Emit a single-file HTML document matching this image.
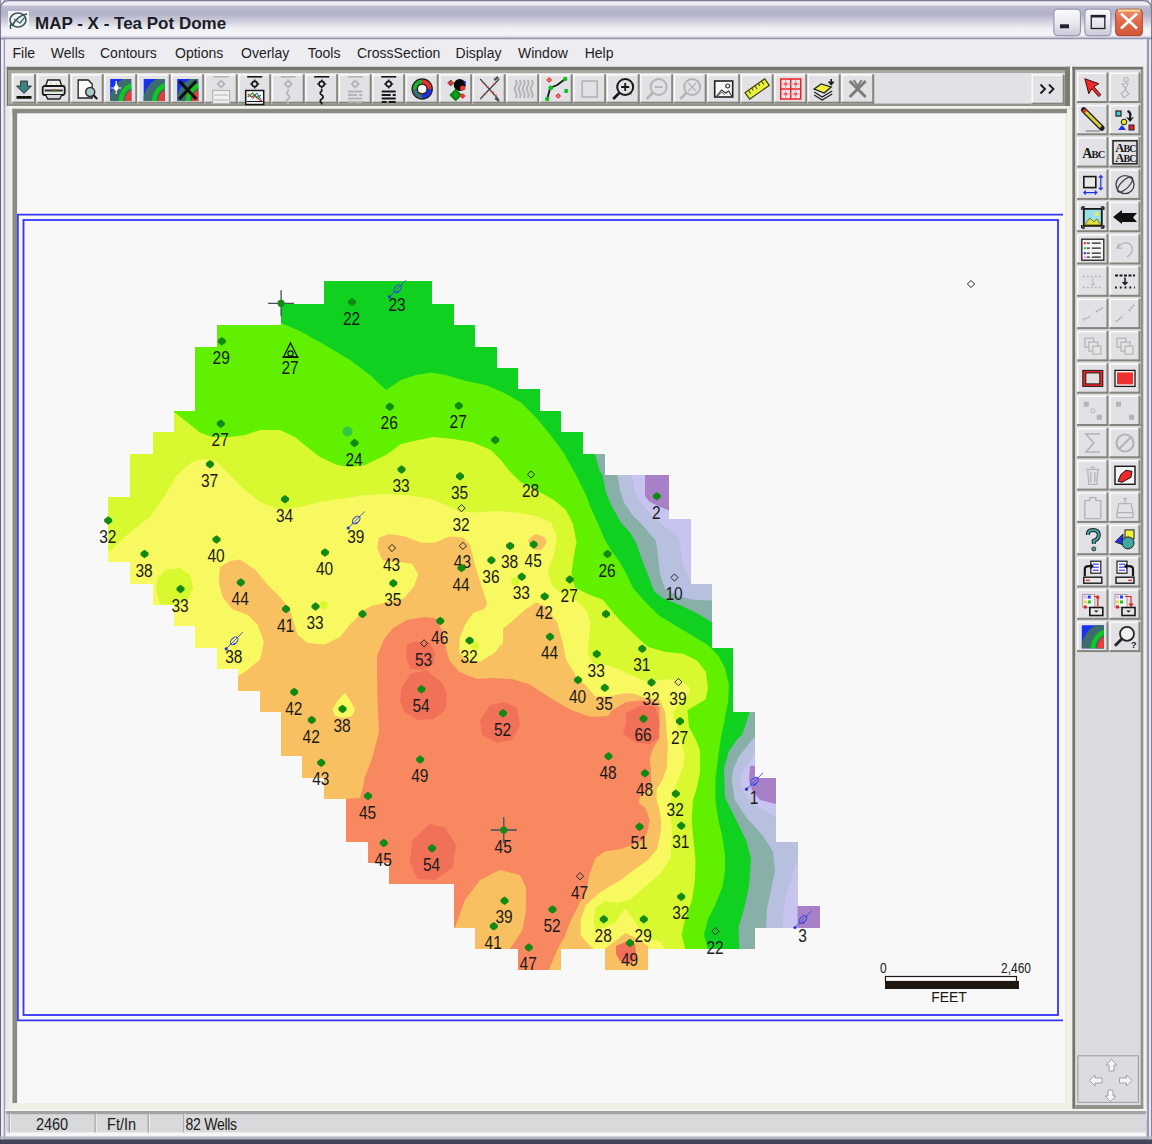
<!DOCTYPE html>
<html><head><meta charset="utf-8"><title>MAP - X - Tea Pot Dome</title>
<style>
html,body{margin:0;padding:0;width:1152px;height:1144px;overflow:hidden;background:#e2e1e5;font-family:"Liberation Sans",sans-serif}
#w{position:relative;width:1152px;height:1144px}
</style></head><body><div id="w">
<svg width="1152" height="1144" viewBox="0 0 1152 1144" style="position:absolute;left:0;top:0">
<rect x="0" y="0" width="1152" height="1144" fill="#e2e1e5" />
<rect x="0" y="0" width="1152" height="1144" fill="#6c6488" />
<rect x="0.7" y="0" width="1150.6" height="1143.3" fill="#ececf2" />
<rect x="3.7" y="0" width="1144.6" height="1140" fill="#9c9cb4" />
<rect x="5.2" y="0" width="1141.6" height="1137" fill="#e8e8ec" />
<defs><linearGradient id="tg" x1="0" y1="0" x2="0" y2="1"><stop offset="0" stop-color="#f2f2f6"/><stop offset="0.1" stop-color="#ececf2"/><stop offset="0.15" stop-color="#bcbcd0"/><stop offset="0.35" stop-color="#b2b2c8"/><stop offset="0.55" stop-color="#cdcddb"/><stop offset="0.75" stop-color="#eeeef3"/><stop offset="0.92" stop-color="#f6f6f9"/><stop offset="1" stop-color="#e4e4ec"/></linearGradient><linearGradient id="bg" x1="0" y1="0" x2="0" y2="1"><stop offset="0" stop-color="#fdfdfe"/><stop offset="0.6" stop-color="#e4e4ec"/><stop offset="1" stop-color="#c8c8d8"/></linearGradient><linearGradient id="cg" x1="0" y1="0" x2="0" y2="1"><stop offset="0" stop-color="#f09070"/><stop offset="0.5" stop-color="#e06848"/><stop offset="1" stop-color="#d05838"/></linearGradient></defs>
<path d="M0,37 V9 Q0,0 9,0 H1143 Q1152,0 1152,9 V37Z" fill="#7c7898"/>
<path d="M1,37 V9.5 Q1,1.2 9.5,1.2 H1142.5 Q1151,1.2 1151,9.5 V37Z" fill="url(#tg)"/>
<rect x="0" y="36.5" width="1152" height="1.2" fill="#d0d0dc" />
<rect x="0" y="37.7" width="1152" height="1.8" fill="#9494ac" />
<rect x="0" y="36.5" width="1" height="1108" fill="#6c6488" />
<rect x="1151" y="36.5" width="1" height="1108" fill="#6c6488" />
<text x="35" y="28.6" font-family="Liberation Sans, sans-serif" font-weight="bold" font-size="17" fill="#1c1c28">MAP - X - Tea Pot Dome</text>
<g transform="translate(8,11)"><rect x="0" y="0" width="21" height="20" fill="#f4f4f8"/><ellipse cx="10" cy="9" rx="8" ry="7" fill="none" stroke="#405858" stroke-width="1.6"/><path d="M4,15 Q10,4 19,3" stroke="#305050" stroke-width="1.6" fill="none"/><path d="M6,8 L12,12 L17,6" stroke="#407070" stroke-width="1.4" fill="none"/><path d="M3,18 Q1,14 4,13" stroke="#304848" stroke-width="1.4" fill="none"/></g>
<rect x="1053.9" y="9.2" width="26.5" height="26.5" rx="3.5" fill="url(#bg)" stroke="#8c8ca8" stroke-width="1"/>
<rect x="1060" y="24.3" width="9" height="4" fill="#202030" />
<rect x="1084.9" y="9.2" width="26" height="26.5" rx="3.5" fill="url(#bg)" stroke="#8c8ca8" stroke-width="1"/>
<rect x="1091.3" y="15.5" width="13.5" height="13" fill="none" stroke="#202030" stroke-width="1.3"/>
<rect x="1091" y="15" width="14.5" height="2.5" fill="#202030" />
<rect x="1115.7" y="9.2" width="26.6" height="26.5" rx="3.5" fill="url(#cg)" stroke="#a83c30" stroke-width="1"/>
<rect x="1118" y="9.5" width="22" height="2" fill="#f8e090" />
<path d="M1121,13.5 L1137,28.5 M1137,13.5 L1121,28.5" stroke="#fff" stroke-width="2.6"/>
<rect x="5.2" y="39.5" width="1141.6" height="27.3" fill="#ececf1" />
<g font-family="Liberation Sans, sans-serif" font-size="14" fill="#1e1e1e">
<text x="12.5" y="57.8">File</text>
<text x="50.8" y="57.8">Wells</text>
<text x="100" y="57.8">Contours</text>
<text x="175" y="57.8">Options</text>
<text x="241" y="57.8">Overlay</text>
<text x="307.8" y="57.8">Tools</text>
<text x="357" y="57.8">CrossSection</text>
<text x="455.6" y="57.8">Display</text>
<text x="518" y="57.8">Window</text>
<text x="584.7" y="57.8">Help</text>
</g>
<rect x="6.8" y="66.8" width="1064.2" height="3.2" fill="#74746c" />
<rect x="6.8" y="66.8" width="1.8" height="41" fill="#74746c" />
<rect x="8.6" y="70" width="1062" height="3" fill="#a8a8a2" />
<rect x="8.6" y="70" width="3" height="37" fill="#a8a8a2" />
<rect x="11.6" y="73" width="1054.6" height="31" fill="#e2e1e5" />
<rect x="8.6" y="103.6" width="1062" height="2.5" fill="#92928a" />
<rect x="1065" y="66.8" width="5" height="41" fill="#7c7c74" />
<rect x="1070" y="66.8" width="2.4" height="42" fill="#f2f2ea" />
<rect x="6.8" y="106" width="1066" height="3" fill="#f2f2ea" />
<rect x="12" y="74.2" width="24" height="29.5" fill="#e2e1e5" /><rect x="12" y="74.2" width="24" height="1.5" fill="#fbfbf8" /><rect x="12" y="74.2" width="1.5" height="29.5" fill="#fbfbf8" /><rect x="12" y="101.7" width="24" height="2" fill="#85857d" /><rect x="34" y="74.2" width="2" height="29.5" fill="#85857d" />
<rect x="37.2" y="74.2" width="33" height="29.5" fill="#e2e1e5" /><rect x="37.2" y="74.2" width="33" height="1.5" fill="#fbfbf8" /><rect x="37.2" y="74.2" width="1.5" height="29.5" fill="#fbfbf8" /><rect x="37.2" y="101.7" width="33" height="2" fill="#85857d" /><rect x="68.2" y="74.2" width="2" height="29.5" fill="#85857d" />
<rect x="70.7" y="74.2" width="33" height="29.5" fill="#e2e1e5" /><rect x="70.7" y="74.2" width="33" height="1.5" fill="#fbfbf8" /><rect x="70.7" y="74.2" width="1.5" height="29.5" fill="#fbfbf8" /><rect x="70.7" y="101.7" width="33" height="2" fill="#85857d" /><rect x="101.7" y="74.2" width="2" height="29.5" fill="#85857d" />
<rect x="104.2" y="74.2" width="33" height="29.5" fill="#e2e1e5" /><rect x="104.2" y="74.2" width="33" height="1.5" fill="#fbfbf8" /><rect x="104.2" y="74.2" width="1.5" height="29.5" fill="#fbfbf8" /><rect x="104.2" y="101.7" width="33" height="2" fill="#85857d" /><rect x="135.2" y="74.2" width="2" height="29.5" fill="#85857d" />
<rect x="137.7" y="74.2" width="33" height="29.5" fill="#e2e1e5" /><rect x="137.7" y="74.2" width="33" height="1.5" fill="#fbfbf8" /><rect x="137.7" y="74.2" width="1.5" height="29.5" fill="#fbfbf8" /><rect x="137.7" y="101.7" width="33" height="2" fill="#85857d" /><rect x="168.7" y="74.2" width="2" height="29.5" fill="#85857d" />
<rect x="171.2" y="74.2" width="33" height="29.5" fill="#e2e1e5" /><rect x="171.2" y="74.2" width="33" height="1.5" fill="#fbfbf8" /><rect x="171.2" y="74.2" width="1.5" height="29.5" fill="#fbfbf8" /><rect x="171.2" y="101.7" width="33" height="2" fill="#85857d" /><rect x="202.2" y="74.2" width="2" height="29.5" fill="#85857d" />
<rect x="204.7" y="74.2" width="33" height="29.5" fill="#e2e1e5" /><rect x="204.7" y="74.2" width="33" height="1.5" fill="#fbfbf8" /><rect x="204.7" y="74.2" width="1.5" height="29.5" fill="#fbfbf8" /><rect x="204.7" y="101.7" width="33" height="2" fill="#85857d" /><rect x="235.7" y="74.2" width="2" height="29.5" fill="#85857d" />
<rect x="238.2" y="74.2" width="33" height="29.5" fill="#e2e1e5" /><rect x="238.2" y="74.2" width="33" height="1.5" fill="#fbfbf8" /><rect x="238.2" y="74.2" width="1.5" height="29.5" fill="#fbfbf8" /><rect x="238.2" y="101.7" width="33" height="2" fill="#85857d" /><rect x="269.2" y="74.2" width="2" height="29.5" fill="#85857d" />
<rect x="271.7" y="74.2" width="33" height="29.5" fill="#e2e1e5" /><rect x="271.7" y="74.2" width="33" height="1.5" fill="#fbfbf8" /><rect x="271.7" y="74.2" width="1.5" height="29.5" fill="#fbfbf8" /><rect x="271.7" y="101.7" width="33" height="2" fill="#85857d" /><rect x="302.7" y="74.2" width="2" height="29.5" fill="#85857d" />
<rect x="305.2" y="74.2" width="33" height="29.5" fill="#e2e1e5" /><rect x="305.2" y="74.2" width="33" height="1.5" fill="#fbfbf8" /><rect x="305.2" y="74.2" width="1.5" height="29.5" fill="#fbfbf8" /><rect x="305.2" y="101.7" width="33" height="2" fill="#85857d" /><rect x="336.2" y="74.2" width="2" height="29.5" fill="#85857d" />
<rect x="338.7" y="74.2" width="33" height="29.5" fill="#e2e1e5" /><rect x="338.7" y="74.2" width="33" height="1.5" fill="#fbfbf8" /><rect x="338.7" y="74.2" width="1.5" height="29.5" fill="#fbfbf8" /><rect x="338.7" y="101.7" width="33" height="2" fill="#85857d" /><rect x="369.7" y="74.2" width="2" height="29.5" fill="#85857d" />
<rect x="372.2" y="74.2" width="33" height="29.5" fill="#e2e1e5" /><rect x="372.2" y="74.2" width="33" height="1.5" fill="#fbfbf8" /><rect x="372.2" y="74.2" width="1.5" height="29.5" fill="#fbfbf8" /><rect x="372.2" y="101.7" width="33" height="2" fill="#85857d" /><rect x="403.2" y="74.2" width="2" height="29.5" fill="#85857d" />
<rect x="405.7" y="74.2" width="33" height="29.5" fill="#e2e1e5" /><rect x="405.7" y="74.2" width="33" height="1.5" fill="#fbfbf8" /><rect x="405.7" y="74.2" width="1.5" height="29.5" fill="#fbfbf8" /><rect x="405.7" y="101.7" width="33" height="2" fill="#85857d" /><rect x="436.7" y="74.2" width="2" height="29.5" fill="#85857d" />
<rect x="439.2" y="74.2" width="33" height="29.5" fill="#e2e1e5" /><rect x="439.2" y="74.2" width="33" height="1.5" fill="#fbfbf8" /><rect x="439.2" y="74.2" width="1.5" height="29.5" fill="#fbfbf8" /><rect x="439.2" y="101.7" width="33" height="2" fill="#85857d" /><rect x="470.2" y="74.2" width="2" height="29.5" fill="#85857d" />
<rect x="472.7" y="74.2" width="33" height="29.5" fill="#e2e1e5" /><rect x="472.7" y="74.2" width="33" height="1.5" fill="#fbfbf8" /><rect x="472.7" y="74.2" width="1.5" height="29.5" fill="#fbfbf8" /><rect x="472.7" y="101.7" width="33" height="2" fill="#85857d" /><rect x="503.7" y="74.2" width="2" height="29.5" fill="#85857d" />
<rect x="506.2" y="74.2" width="33" height="29.5" fill="#e2e1e5" /><rect x="506.2" y="74.2" width="33" height="1.5" fill="#fbfbf8" /><rect x="506.2" y="74.2" width="1.5" height="29.5" fill="#fbfbf8" /><rect x="506.2" y="101.7" width="33" height="2" fill="#85857d" /><rect x="537.2" y="74.2" width="2" height="29.5" fill="#85857d" />
<rect x="539.7" y="74.2" width="33" height="29.5" fill="#e2e1e5" /><rect x="539.7" y="74.2" width="33" height="1.5" fill="#fbfbf8" /><rect x="539.7" y="74.2" width="1.5" height="29.5" fill="#fbfbf8" /><rect x="539.7" y="101.7" width="33" height="2" fill="#85857d" /><rect x="570.7" y="74.2" width="2" height="29.5" fill="#85857d" />
<rect x="573.2" y="74.2" width="33" height="29.5" fill="#e2e1e5" /><rect x="573.2" y="74.2" width="33" height="1.5" fill="#fbfbf8" /><rect x="573.2" y="74.2" width="1.5" height="29.5" fill="#fbfbf8" /><rect x="573.2" y="101.7" width="33" height="2" fill="#85857d" /><rect x="604.2" y="74.2" width="2" height="29.5" fill="#85857d" />
<rect x="606.7" y="74.2" width="33" height="29.5" fill="#e2e1e5" /><rect x="606.7" y="74.2" width="33" height="1.5" fill="#fbfbf8" /><rect x="606.7" y="74.2" width="1.5" height="29.5" fill="#fbfbf8" /><rect x="606.7" y="101.7" width="33" height="2" fill="#85857d" /><rect x="637.7" y="74.2" width="2" height="29.5" fill="#85857d" />
<rect x="640.2" y="74.2" width="33" height="29.5" fill="#e2e1e5" /><rect x="640.2" y="74.2" width="33" height="1.5" fill="#fbfbf8" /><rect x="640.2" y="74.2" width="1.5" height="29.5" fill="#fbfbf8" /><rect x="640.2" y="101.7" width="33" height="2" fill="#85857d" /><rect x="671.2" y="74.2" width="2" height="29.5" fill="#85857d" />
<rect x="673.7" y="74.2" width="33" height="29.5" fill="#e2e1e5" /><rect x="673.7" y="74.2" width="33" height="1.5" fill="#fbfbf8" /><rect x="673.7" y="74.2" width="1.5" height="29.5" fill="#fbfbf8" /><rect x="673.7" y="101.7" width="33" height="2" fill="#85857d" /><rect x="704.7" y="74.2" width="2" height="29.5" fill="#85857d" />
<rect x="707.2" y="74.2" width="33" height="29.5" fill="#e2e1e5" /><rect x="707.2" y="74.2" width="33" height="1.5" fill="#fbfbf8" /><rect x="707.2" y="74.2" width="1.5" height="29.5" fill="#fbfbf8" /><rect x="707.2" y="101.7" width="33" height="2" fill="#85857d" /><rect x="738.2" y="74.2" width="2" height="29.5" fill="#85857d" />
<rect x="740.7" y="74.2" width="33" height="29.5" fill="#e2e1e5" /><rect x="740.7" y="74.2" width="33" height="1.5" fill="#fbfbf8" /><rect x="740.7" y="74.2" width="1.5" height="29.5" fill="#fbfbf8" /><rect x="740.7" y="101.7" width="33" height="2" fill="#85857d" /><rect x="771.7" y="74.2" width="2" height="29.5" fill="#85857d" />
<rect x="774.2" y="74.2" width="33" height="29.5" fill="#e2e1e5" /><rect x="774.2" y="74.2" width="33" height="1.5" fill="#fbfbf8" /><rect x="774.2" y="74.2" width="1.5" height="29.5" fill="#fbfbf8" /><rect x="774.2" y="101.7" width="33" height="2" fill="#85857d" /><rect x="805.2" y="74.2" width="2" height="29.5" fill="#85857d" />
<rect x="807.7" y="74.2" width="33" height="29.5" fill="#e2e1e5" /><rect x="807.7" y="74.2" width="33" height="1.5" fill="#fbfbf8" /><rect x="807.7" y="74.2" width="1.5" height="29.5" fill="#fbfbf8" /><rect x="807.7" y="101.7" width="33" height="2" fill="#85857d" /><rect x="838.7" y="74.2" width="2" height="29.5" fill="#85857d" />
<rect x="841.2" y="74.2" width="33" height="29.5" fill="#e2e1e5" /><rect x="841.2" y="74.2" width="33" height="1.5" fill="#fbfbf8" /><rect x="841.2" y="74.2" width="1.5" height="29.5" fill="#fbfbf8" /><rect x="841.2" y="101.7" width="33" height="2" fill="#85857d" /><rect x="872.2" y="74.2" width="2" height="29.5" fill="#85857d" />
<rect x="1031.5" y="74.4" width="33.2" height="30.3" fill="#e2e1e5" /><rect x="1031.5" y="74.4" width="33.2" height="1.5" fill="#fbfbf8" /><rect x="1031.5" y="74.4" width="1.5" height="30.3" fill="#fbfbf8" /><rect x="1031.5" y="102.7" width="33.2" height="2" fill="#85857d" /><rect x="1062.7" y="74.4" width="2" height="30.3" fill="#85857d" />
<path d="M1040.5,84.5 L1045,89 L1040.5,93.5 M1049,84.5 L1053.5,89 L1049,93.5" stroke="#1a1a1a" stroke-width="1.8" fill="none"/>
<rect x="9" y="108.8" width="1063" height="2.5" fill="#f0f0e8" />
<rect x="9" y="108.8" width="3.5" height="1000" fill="#f0f0e8" />
<rect x="12.5" y="108.8" width="1060" height="4.7" fill="#8a8a82" />
<rect x="12.5" y="108.8" width="4.8" height="995" fill="#8a8a82" />
<rect x="17.3" y="113.5" width="1048.2" height="989.5" fill="#f8f8f8" />
<rect x="1065.3" y="113.5" width="1.6" height="989.5" fill="#ece9d8" />
<rect x="1066.9" y="108.8" width="5.5" height="1000" fill="#f2f2ea" />
<rect x="12.5" y="1103" width="1060" height="6" fill="#f0f0e6" />
<rect x="1072.4" y="66.8" width="3" height="1042" fill="#74746c" />
<rect x="1075.4" y="69.5" width="65.2" height="1039" fill="#dcdce0" />
<rect x="1072.4" y="66.8" width="71" height="2.8" fill="#74746c" />
<rect x="1140.6" y="69.5" width="3" height="1040" fill="#92928a" />
<rect x="1075.4" y="1105" width="68" height="4" fill="#92928a" />
<rect x="1143.5" y="39.5" width="3.3" height="1080" fill="#f0f0f2" />
<rect x="1146.8" y="39.5" width="2.4" height="1100" fill="#9898b0" />
<rect x="1149.2" y="39.5" width="2" height="1100" fill="#e8e8f0" />
<rect x="1077" y="72.5" width="31.5" height="30.5" fill="#e2e1e5" /><rect x="1077" y="72.5" width="31.5" height="1.5" fill="#fbfbf8" /><rect x="1077" y="72.5" width="1.5" height="30.5" fill="#fbfbf8" /><rect x="1077" y="101.0" width="31.5" height="2" fill="#85857d" /><rect x="1106.5" y="72.5" width="2" height="30.5" fill="#85857d" />
<rect x="1109.5" y="72.5" width="31" height="30.5" fill="#e2e1e5" /><rect x="1109.5" y="72.5" width="31" height="1.5" fill="#fbfbf8" /><rect x="1109.5" y="72.5" width="1.5" height="30.5" fill="#fbfbf8" /><rect x="1109.5" y="101.0" width="31" height="2" fill="#85857d" /><rect x="1138.5" y="72.5" width="2" height="30.5" fill="#85857d" />
<rect x="1077" y="104.8" width="31.5" height="30.5" fill="#e2e1e5" /><rect x="1077" y="104.8" width="31.5" height="1.5" fill="#fbfbf8" /><rect x="1077" y="104.8" width="1.5" height="30.5" fill="#fbfbf8" /><rect x="1077" y="133.3" width="31.5" height="2" fill="#85857d" /><rect x="1106.5" y="104.8" width="2" height="30.5" fill="#85857d" />
<rect x="1109.5" y="104.8" width="31" height="30.5" fill="#e2e1e5" /><rect x="1109.5" y="104.8" width="31" height="1.5" fill="#fbfbf8" /><rect x="1109.5" y="104.8" width="1.5" height="30.5" fill="#fbfbf8" /><rect x="1109.5" y="133.3" width="31" height="2" fill="#85857d" /><rect x="1138.5" y="104.8" width="2" height="30.5" fill="#85857d" />
<rect x="1077" y="137.1" width="31.5" height="30.5" fill="#e2e1e5" /><rect x="1077" y="137.1" width="31.5" height="1.5" fill="#fbfbf8" /><rect x="1077" y="137.1" width="1.5" height="30.5" fill="#fbfbf8" /><rect x="1077" y="165.6" width="31.5" height="2" fill="#85857d" /><rect x="1106.5" y="137.1" width="2" height="30.5" fill="#85857d" />
<rect x="1109.5" y="137.1" width="31" height="30.5" fill="#e2e1e5" /><rect x="1109.5" y="137.1" width="31" height="1.5" fill="#fbfbf8" /><rect x="1109.5" y="137.1" width="1.5" height="30.5" fill="#fbfbf8" /><rect x="1109.5" y="165.6" width="31" height="2" fill="#85857d" /><rect x="1138.5" y="137.1" width="2" height="30.5" fill="#85857d" />
<rect x="1077" y="169.4" width="31.5" height="30.5" fill="#e2e1e5" /><rect x="1077" y="169.4" width="31.5" height="1.5" fill="#fbfbf8" /><rect x="1077" y="169.4" width="1.5" height="30.5" fill="#fbfbf8" /><rect x="1077" y="197.9" width="31.5" height="2" fill="#85857d" /><rect x="1106.5" y="169.4" width="2" height="30.5" fill="#85857d" />
<rect x="1109.5" y="169.4" width="31" height="30.5" fill="#e2e1e5" /><rect x="1109.5" y="169.4" width="31" height="1.5" fill="#fbfbf8" /><rect x="1109.5" y="169.4" width="1.5" height="30.5" fill="#fbfbf8" /><rect x="1109.5" y="197.9" width="31" height="2" fill="#85857d" /><rect x="1138.5" y="169.4" width="2" height="30.5" fill="#85857d" />
<rect x="1077" y="201.7" width="31.5" height="30.5" fill="#e2e1e5" /><rect x="1077" y="201.7" width="31.5" height="1.5" fill="#fbfbf8" /><rect x="1077" y="201.7" width="1.5" height="30.5" fill="#fbfbf8" /><rect x="1077" y="230.2" width="31.5" height="2" fill="#85857d" /><rect x="1106.5" y="201.7" width="2" height="30.5" fill="#85857d" />
<rect x="1109.5" y="201.7" width="31" height="30.5" fill="#e2e1e5" /><rect x="1109.5" y="201.7" width="31" height="1.5" fill="#fbfbf8" /><rect x="1109.5" y="201.7" width="1.5" height="30.5" fill="#fbfbf8" /><rect x="1109.5" y="230.2" width="31" height="2" fill="#85857d" /><rect x="1138.5" y="201.7" width="2" height="30.5" fill="#85857d" />
<rect x="1077" y="234.0" width="31.5" height="30.5" fill="#e2e1e5" /><rect x="1077" y="234.0" width="31.5" height="1.5" fill="#fbfbf8" /><rect x="1077" y="234.0" width="1.5" height="30.5" fill="#fbfbf8" /><rect x="1077" y="262.5" width="31.5" height="2" fill="#85857d" /><rect x="1106.5" y="234.0" width="2" height="30.5" fill="#85857d" />
<rect x="1109.5" y="234.0" width="31" height="30.5" fill="#e2e1e5" /><rect x="1109.5" y="234.0" width="31" height="1.5" fill="#fbfbf8" /><rect x="1109.5" y="234.0" width="1.5" height="30.5" fill="#fbfbf8" /><rect x="1109.5" y="262.5" width="31" height="2" fill="#85857d" /><rect x="1138.5" y="234.0" width="2" height="30.5" fill="#85857d" />
<rect x="1077" y="266.3" width="31.5" height="30.5" fill="#e2e1e5" /><rect x="1077" y="266.3" width="31.5" height="1.5" fill="#fbfbf8" /><rect x="1077" y="266.3" width="1.5" height="30.5" fill="#fbfbf8" /><rect x="1077" y="294.8" width="31.5" height="2" fill="#85857d" /><rect x="1106.5" y="266.3" width="2" height="30.5" fill="#85857d" />
<rect x="1109.5" y="266.3" width="31" height="30.5" fill="#e2e1e5" /><rect x="1109.5" y="266.3" width="31" height="1.5" fill="#fbfbf8" /><rect x="1109.5" y="266.3" width="1.5" height="30.5" fill="#fbfbf8" /><rect x="1109.5" y="294.8" width="31" height="2" fill="#85857d" /><rect x="1138.5" y="266.3" width="2" height="30.5" fill="#85857d" />
<rect x="1077" y="298.6" width="31.5" height="30.5" fill="#e2e1e5" /><rect x="1077" y="298.6" width="31.5" height="1.5" fill="#fbfbf8" /><rect x="1077" y="298.6" width="1.5" height="30.5" fill="#fbfbf8" /><rect x="1077" y="327.1" width="31.5" height="2" fill="#85857d" /><rect x="1106.5" y="298.6" width="2" height="30.5" fill="#85857d" />
<rect x="1109.5" y="298.6" width="31" height="30.5" fill="#e2e1e5" /><rect x="1109.5" y="298.6" width="31" height="1.5" fill="#fbfbf8" /><rect x="1109.5" y="298.6" width="1.5" height="30.5" fill="#fbfbf8" /><rect x="1109.5" y="327.1" width="31" height="2" fill="#85857d" /><rect x="1138.5" y="298.6" width="2" height="30.5" fill="#85857d" />
<rect x="1077" y="330.9" width="31.5" height="30.5" fill="#e2e1e5" /><rect x="1077" y="330.9" width="31.5" height="1.5" fill="#fbfbf8" /><rect x="1077" y="330.9" width="1.5" height="30.5" fill="#fbfbf8" /><rect x="1077" y="359.4" width="31.5" height="2" fill="#85857d" /><rect x="1106.5" y="330.9" width="2" height="30.5" fill="#85857d" />
<rect x="1109.5" y="330.9" width="31" height="30.5" fill="#e2e1e5" /><rect x="1109.5" y="330.9" width="31" height="1.5" fill="#fbfbf8" /><rect x="1109.5" y="330.9" width="1.5" height="30.5" fill="#fbfbf8" /><rect x="1109.5" y="359.4" width="31" height="2" fill="#85857d" /><rect x="1138.5" y="330.9" width="2" height="30.5" fill="#85857d" />
<rect x="1077" y="363.2" width="31.5" height="30.5" fill="#e2e1e5" /><rect x="1077" y="363.2" width="31.5" height="1.5" fill="#fbfbf8" /><rect x="1077" y="363.2" width="1.5" height="30.5" fill="#fbfbf8" /><rect x="1077" y="391.7" width="31.5" height="2" fill="#85857d" /><rect x="1106.5" y="363.2" width="2" height="30.5" fill="#85857d" />
<rect x="1109.5" y="363.2" width="31" height="30.5" fill="#e2e1e5" /><rect x="1109.5" y="363.2" width="31" height="1.5" fill="#fbfbf8" /><rect x="1109.5" y="363.2" width="1.5" height="30.5" fill="#fbfbf8" /><rect x="1109.5" y="391.7" width="31" height="2" fill="#85857d" /><rect x="1138.5" y="363.2" width="2" height="30.5" fill="#85857d" />
<rect x="1077" y="395.5" width="31.5" height="30.5" fill="#e2e1e5" /><rect x="1077" y="395.5" width="31.5" height="1.5" fill="#fbfbf8" /><rect x="1077" y="395.5" width="1.5" height="30.5" fill="#fbfbf8" /><rect x="1077" y="424.0" width="31.5" height="2" fill="#85857d" /><rect x="1106.5" y="395.5" width="2" height="30.5" fill="#85857d" />
<rect x="1109.5" y="395.5" width="31" height="30.5" fill="#e2e1e5" /><rect x="1109.5" y="395.5" width="31" height="1.5" fill="#fbfbf8" /><rect x="1109.5" y="395.5" width="1.5" height="30.5" fill="#fbfbf8" /><rect x="1109.5" y="424.0" width="31" height="2" fill="#85857d" /><rect x="1138.5" y="395.5" width="2" height="30.5" fill="#85857d" />
<rect x="1077" y="427.8" width="31.5" height="30.5" fill="#e2e1e5" /><rect x="1077" y="427.8" width="31.5" height="1.5" fill="#fbfbf8" /><rect x="1077" y="427.8" width="1.5" height="30.5" fill="#fbfbf8" /><rect x="1077" y="456.3" width="31.5" height="2" fill="#85857d" /><rect x="1106.5" y="427.8" width="2" height="30.5" fill="#85857d" />
<rect x="1109.5" y="427.8" width="31" height="30.5" fill="#e2e1e5" /><rect x="1109.5" y="427.8" width="31" height="1.5" fill="#fbfbf8" /><rect x="1109.5" y="427.8" width="1.5" height="30.5" fill="#fbfbf8" /><rect x="1109.5" y="456.3" width="31" height="2" fill="#85857d" /><rect x="1138.5" y="427.8" width="2" height="30.5" fill="#85857d" />
<rect x="1077" y="460.1" width="31.5" height="30.5" fill="#e2e1e5" /><rect x="1077" y="460.1" width="31.5" height="1.5" fill="#fbfbf8" /><rect x="1077" y="460.1" width="1.5" height="30.5" fill="#fbfbf8" /><rect x="1077" y="488.6" width="31.5" height="2" fill="#85857d" /><rect x="1106.5" y="460.1" width="2" height="30.5" fill="#85857d" />
<rect x="1109.5" y="460.1" width="31" height="30.5" fill="#e2e1e5" /><rect x="1109.5" y="460.1" width="31" height="1.5" fill="#fbfbf8" /><rect x="1109.5" y="460.1" width="1.5" height="30.5" fill="#fbfbf8" /><rect x="1109.5" y="488.6" width="31" height="2" fill="#85857d" /><rect x="1138.5" y="460.1" width="2" height="30.5" fill="#85857d" />
<rect x="1077" y="492.4" width="31.5" height="30.5" fill="#e2e1e5" /><rect x="1077" y="492.4" width="31.5" height="1.5" fill="#fbfbf8" /><rect x="1077" y="492.4" width="1.5" height="30.5" fill="#fbfbf8" /><rect x="1077" y="520.9" width="31.5" height="2" fill="#85857d" /><rect x="1106.5" y="492.4" width="2" height="30.5" fill="#85857d" />
<rect x="1109.5" y="492.4" width="31" height="30.5" fill="#e2e1e5" /><rect x="1109.5" y="492.4" width="31" height="1.5" fill="#fbfbf8" /><rect x="1109.5" y="492.4" width="1.5" height="30.5" fill="#fbfbf8" /><rect x="1109.5" y="520.9" width="31" height="2" fill="#85857d" /><rect x="1138.5" y="492.4" width="2" height="30.5" fill="#85857d" />
<rect x="1077" y="524.7" width="31.5" height="30.5" fill="#e2e1e5" /><rect x="1077" y="524.7" width="31.5" height="1.5" fill="#fbfbf8" /><rect x="1077" y="524.7" width="1.5" height="30.5" fill="#fbfbf8" /><rect x="1077" y="553.2" width="31.5" height="2" fill="#85857d" /><rect x="1106.5" y="524.7" width="2" height="30.5" fill="#85857d" />
<rect x="1109.5" y="524.7" width="31" height="30.5" fill="#e2e1e5" /><rect x="1109.5" y="524.7" width="31" height="1.5" fill="#fbfbf8" /><rect x="1109.5" y="524.7" width="1.5" height="30.5" fill="#fbfbf8" /><rect x="1109.5" y="553.2" width="31" height="2" fill="#85857d" /><rect x="1138.5" y="524.7" width="2" height="30.5" fill="#85857d" />
<rect x="1077" y="557.0" width="31.5" height="30.5" fill="#e2e1e5" /><rect x="1077" y="557.0" width="31.5" height="1.5" fill="#fbfbf8" /><rect x="1077" y="557.0" width="1.5" height="30.5" fill="#fbfbf8" /><rect x="1077" y="585.5" width="31.5" height="2" fill="#85857d" /><rect x="1106.5" y="557.0" width="2" height="30.5" fill="#85857d" />
<rect x="1109.5" y="557.0" width="31" height="30.5" fill="#e2e1e5" /><rect x="1109.5" y="557.0" width="31" height="1.5" fill="#fbfbf8" /><rect x="1109.5" y="557.0" width="1.5" height="30.5" fill="#fbfbf8" /><rect x="1109.5" y="585.5" width="31" height="2" fill="#85857d" /><rect x="1138.5" y="557.0" width="2" height="30.5" fill="#85857d" />
<rect x="1077" y="589.3" width="31.5" height="30.5" fill="#e2e1e5" /><rect x="1077" y="589.3" width="31.5" height="1.5" fill="#fbfbf8" /><rect x="1077" y="589.3" width="1.5" height="30.5" fill="#fbfbf8" /><rect x="1077" y="617.8" width="31.5" height="2" fill="#85857d" /><rect x="1106.5" y="589.3" width="2" height="30.5" fill="#85857d" />
<rect x="1109.5" y="589.3" width="31" height="30.5" fill="#e2e1e5" /><rect x="1109.5" y="589.3" width="31" height="1.5" fill="#fbfbf8" /><rect x="1109.5" y="589.3" width="1.5" height="30.5" fill="#fbfbf8" /><rect x="1109.5" y="617.8" width="31" height="2" fill="#85857d" /><rect x="1138.5" y="589.3" width="2" height="30.5" fill="#85857d" />
<rect x="1077" y="621.6" width="31.5" height="30.5" fill="#e2e1e5" /><rect x="1077" y="621.6" width="31.5" height="1.5" fill="#fbfbf8" /><rect x="1077" y="621.6" width="1.5" height="30.5" fill="#fbfbf8" /><rect x="1077" y="650.1" width="31.5" height="2" fill="#85857d" /><rect x="1106.5" y="621.6" width="2" height="30.5" fill="#85857d" />
<rect x="1109.5" y="621.6" width="31" height="30.5" fill="#e2e1e5" /><rect x="1109.5" y="621.6" width="31" height="1.5" fill="#fbfbf8" /><rect x="1109.5" y="621.6" width="1.5" height="30.5" fill="#fbfbf8" /><rect x="1109.5" y="650.1" width="31" height="2" fill="#85857d" /><rect x="1138.5" y="621.6" width="2" height="30.5" fill="#85857d" />
<rect x="1077.9" y="1055.8" width="60.5" height="46.5" fill="#dcdce0" stroke="#9a9a9a" stroke-width="1"/>
<g fill="#f4f4f4" stroke="#9a9a9a" stroke-width="0.9"><path d="M1111.5,1059.5 L1117,1065 H1114 V1071 H1109 V1065 H1106Z"/><path d="M1110.5,1101.5 L1116,1096 H1113 V1090 H1108 V1096 H1105Z"/><path d="M1089.5,1080.5 L1095,1075 V1078 H1102 V1083 H1095 V1086Z"/><path d="M1132,1080.5 L1126.5,1075 V1078 H1119.5 V1083 H1126.5 V1086Z"/></g>
<rect x="5.2" y="1109" width="1141.6" height="2" fill="#f4f4f0" />
<rect x="6" y="1111" width="1140" height="3.5" fill="#a2a2a2" />
<rect x="6" y="1114.5" width="1140" height="18" fill="#d9d9dc" />
<rect x="6" y="1132.5" width="1140" height="4" fill="#f6f6f6" />
<rect x="0" y="1136.5" width="1152" height="3" fill="#b4b4c4" />
<rect x="0" y="1139.5" width="1152" height="4.5" fill="#444458" />
<rect x="8.7" y="1113.5" width="1.2" height="19" fill="#9a9a9a" />
<rect x="9.899999999999999" y="1113.5" width="0.8" height="19" fill="#f8f8f8" />
<rect x="94.6" y="1113.5" width="1.2" height="19" fill="#9a9a9a" />
<rect x="95.8" y="1113.5" width="0.8" height="19" fill="#f8f8f8" />
<rect x="147.7" y="1113.5" width="1.2" height="19" fill="#9a9a9a" />
<rect x="148.89999999999998" y="1113.5" width="0.8" height="19" fill="#f8f8f8" />
<rect x="183.3" y="1113.5" width="1.2" height="19" fill="#9a9a9a" />
<rect x="184.5" y="1113.5" width="0.8" height="19" fill="#f8f8f8" />
<g font-family="Liberation Sans, sans-serif" font-size="14.5" fill="#202020"><text transform="translate(52,1130.3) scale(1,1.2)" text-anchor="middle">2460</text><text transform="translate(121.6,1130.3) scale(1,1.2)" text-anchor="middle">Ft/In</text><text transform="translate(185.5,1130.3) scale(0.97,1.2)" letter-spacing="-0.3">82 Wells</text></g><g transform="translate(24.0,89.0)"><path d="M-3.5,-8H3.5V-3H7.5L0,4.5L-7.5,-3H-3.5Z" fill="#3f8080" stroke="#202020" stroke-width="0.8"/><rect x="-7.5" y="7" width="15" height="2.8" fill="#181410"/></g>
<g transform="translate(53.7,89.0)"><path d="M-6,-9H6L8,-3H-8Z" fill="#f4f4f4" stroke="#202020" stroke-width="1.4"/><rect x="-11" y="-3" width="22" height="9" rx="2" fill="#e8e8e8" stroke="#181818" stroke-width="1.8"/><rect x="-9" y="0.5" width="18" height="2" fill="#303030"/><rect x="-1" y="0.5" width="4" height="1" fill="#e02020"/><rect x="-1" y="1.5" width="4" height="1" fill="#10c010"/><path d="M-8,6 L-6,10 H6 L8,6" fill="#d8d8d8" stroke="#202020" stroke-width="1.4"/><circle cx="-3" cy="-6" r="0.8" fill="#e8d020"/><circle cx="3" cy="-5" r="0.8" fill="#e8d020"/></g>
<g transform="translate(87.2,89.0)"><path d="M-9,-9H1L5,-5V9H-9Z" fill="#fafafa" stroke="#202020" stroke-width="1.3"/><circle cx="3" cy="3" r="4.5" fill="#a8c8c8" stroke="#303030" stroke-width="1.5"/><path d="M6,6L10,10" stroke="#181818" stroke-width="2.2"/></g>
<g transform="translate(120.7,90.0)"><g transform="scale(1.0) translate(-10.5,-11)"><rect x="0" y="0" width="21" height="22" fill="#1830f0"/><path d="M13,0 Q3,5 0,17 V22 H21 V0Z" fill="#3c6c6c"/><path d="M21,4 Q10,8 8,22 H21Z" fill="#10c820"/><path d="M21,9 Q13,13 13,22 H21Z" fill="#3c6c6c"/><path d="M21,11 Q15,14 15,22 H21Z" fill="#f03838"/><path d="M4,9 L6,5 L8,9 L6,12Z M1,9H11 M6,2V15" stroke="#fff" stroke-width="1.2" fill="#fff"/></g></g>
<g transform="translate(154.2,90.0)"><g transform="scale(1.0) translate(-10.5,-11)"><rect x="0" y="0" width="21" height="22" fill="#1830f0"/><path d="M13,0 Q3,5 0,17 V22 H21 V0Z" fill="#3c6c6c"/><path d="M21,4 Q10,8 8,22 H21Z" fill="#10c820"/><path d="M21,9 Q13,13 13,22 H21Z" fill="#3c6c6c"/><path d="M21,11 Q15,14 15,22 H21Z" fill="#f03838"/></g></g>
<g transform="translate(187.7,90.0)"><g transform="scale(1.0) translate(-10.5,-11)"><rect x="0" y="0" width="21" height="22" fill="#1830f0"/><path d="M13,0 Q3,5 0,17 V22 H21 V0Z" fill="#3c6c6c"/><path d="M21,4 Q10,8 8,22 H21Z" fill="#10c820"/><path d="M21,9 Q13,13 13,22 H21Z" fill="#3c6c6c"/><path d="M21,11 Q15,14 15,22 H21Z" fill="#f03838"/><path d="M2,2 L19,20 M19,2 L2,20" stroke="#101010" stroke-width="3.2"/></g></g>
<g transform="translate(221.2,89.0)"><rect x="-7.5" y="-13" width="15" height="1.6" fill="#b4b4b4"/><circle cx="0" cy="-5" r="2.6" fill="none" stroke="#b4b4b4" stroke-width="1.6"/><path d="M0,-9.5V-8 M0,-2V-0.5 M-4.5,-5H-3 M3,-5H4.5" stroke="#b4b4b4" stroke-width="1.4"/><rect x="-8.5" y="1.5" width="17" height="13" fill="#f0f0f0" stroke="#b4b4b4" stroke-width="1.2"/><path d="M-7,6H7 M-7,11H7" stroke="#b4b4b4" stroke-width="1.2"/></g>
<g transform="translate(254.7,89.0)"><rect x="-7.5" y="-13" width="15" height="1.6" fill="#181818"/><circle cx="0" cy="-5" r="2.6" fill="none" stroke="#181818" stroke-width="1.6"/><path d="M0,-9.5V-8 M0,-2V-0.5 M-4.5,-5H-3 M3,-5H4.5" stroke="#181818" stroke-width="1.4"/><rect x="-9" y="1.5" width="18" height="14" fill="#f8f8f8" stroke="#181818" stroke-width="1.5"/><path d="M-7,5 L-3,8 L0,6 L4,10 L7,12" stroke="#e02020" stroke-width="1.3" fill="none"/><path d="M-7,8 L-2,4 L2,9 L6,6" stroke="#10a010" stroke-width="1.2" fill="none"/><path d="M-2,10 L2,4 L6,10" stroke="#2040e0" stroke-width="1" fill="none"/><path d="M-8,12.5H8" stroke="#181818" stroke-width="1"/></g>
<g transform="translate(288.2,89.0)"><rect x="-7.5" y="-13" width="15" height="1.6" fill="#b4b4b4"/><circle cx="0" cy="-5" r="2.6" fill="none" stroke="#b4b4b4" stroke-width="1.6"/><path d="M0,-9.5V-8 M0,-2V-0.5 M-4.5,-5H-3 M3,-5H4.5" stroke="#b4b4b4" stroke-width="1.4"/><path d="M0,0 V2 Q-3,4 0,6 Q3,8 0,10 Q-3,12 0,14 V15.5" stroke="#b4b4b4" stroke-width="1.7" fill="none"/></g>
<g transform="translate(321.7,89.0)"><rect x="-7.5" y="-13" width="15" height="1.6" fill="#181818"/><circle cx="0" cy="-5" r="2.6" fill="none" stroke="#181818" stroke-width="1.6"/><path d="M0,-9.5V-8 M0,-2V-0.5 M-4.5,-5H-3 M3,-5H4.5" stroke="#181818" stroke-width="1.4"/><path d="M0,0 V2 Q-3,4 0,6 Q3,8 0,10 Q-3,12 0,14 V15.5" stroke="#181818" stroke-width="1.7" fill="none"/></g>
<g transform="translate(355.2,89.0)"><rect x="-7.5" y="-13" width="15" height="1.6" fill="#b4b4b4"/><circle cx="0" cy="-5" r="2.6" fill="none" stroke="#b4b4b4" stroke-width="1.6"/><path d="M0,-9.5V-8 M0,-2V-0.5 M-4.5,-5H-3 M3,-5H4.5" stroke="#b4b4b4" stroke-width="1.4"/><path d="M-7,2.5H7 M-7,6H2 M4,6H7 M-7,9.5H7 M-7,13H-2 M0,13H7" stroke="#b4b4b4" stroke-width="1.8"/></g>
<g transform="translate(388.7,89.0)"><rect x="-7.5" y="-13" width="15" height="1.6" fill="#181818"/><circle cx="0" cy="-5" r="2.6" fill="none" stroke="#181818" stroke-width="1.6"/><path d="M0,-9.5V-8 M0,-2V-0.5 M-4.5,-5H-3 M3,-5H4.5" stroke="#181818" stroke-width="1.4"/><path d="M-7,2.5H7 M-7,6H2 M4,6H7 M-7,9.5H7 M-7,13H-2 M0,13H7" stroke="#181818" stroke-width="1.8"/></g>
<g transform="translate(422.2,89.0)"><circle cx="0" cy="0" r="7.5" fill="none" stroke="#202020" stroke-width="6.5"/><path d="M-7.5,0 A7.5,7.5 0 0 1 0,-7.5" stroke="#20b030" stroke-width="4" fill="none"/><path d="M0,-7.5 A7.5,7.5 0 0 1 7.5,0" stroke="#e83030" stroke-width="4" fill="none"/><path d="M7.5,0 A7.5,7.5 0 0 1 0,7.5" stroke="#2030e0" stroke-width="4" fill="none"/><path d="M0,7.5 A7.5,7.5 0 0 1 -7.5,0" stroke="#407070" stroke-width="4" fill="none"/><rect x="-3.5" y="-3" width="7" height="6" fill="#fff"/></g>
<g transform="translate(455.7,89.0)"><circle cx="4" cy="-4" r="6" fill="#080808"/><path d="M-8,-6 L-5,-9 L-2,-6 L-5,-3Z" fill="#f03030" stroke="#202020" stroke-width="0.6"/><circle cx="7" cy="-1" r="2.6" fill="#f03030"/><path d="M-5,6 L0,1 L5,6 L0,11Z" fill="#10a020" stroke="#108010" stroke-width="2" stroke-linejoin="round"/><path d="M4,7 L7,4 L10,7 L7,10Z" fill="#f03030"/><rect x="8" y="-8" width="2" height="3" fill="#2020e0"/></g>
<g transform="translate(489.2,89.0)"><path d="M-9,-10 L9,10 M10,-10 L-9,10" stroke="#404040" stroke-width="1.2"/><path d="M-7,-6h3 M-3,-2h3 M2,3h3 M5,6h3 M4,-5h3 M-6,5h3" stroke="#e05030" stroke-width="1"/><path d="M5,-9 L9,-12 M6,9L10,12" stroke="#505050" stroke-width="2.2"/></g>
<g transform="translate(522.7,89.0)"><path d="M-7,-9 q2,3 0,6 q-2,3 0,6 q2,3 0,6" stroke="#b4b4b4" stroke-width="2" fill="none"/><path d="M-3,-9 q2,3 0,6 q-2,3 0,6 q2,3 0,6" stroke="#b4b4b4" stroke-width="2" fill="none"/><path d="M1,-9 q2,3 0,6 q-2,3 0,6 q2,3 0,6" stroke="#b4b4b4" stroke-width="2" fill="none"/><path d="M5,-9 q2,3 0,6 q-2,3 0,6 q2,3 0,6" stroke="#b4b4b4" stroke-width="2" fill="none"/><path d="M9,-9 q2,3 0,6 q-2,3 0,6 q2,3 0,6" stroke="#b4b4b4" stroke-width="2" fill="none"/></g>
<g transform="translate(556.2,89.0)"><path d="M-9,10 L-6,-1 L1,-4 L9,-10" stroke="#181818" stroke-width="1.8" fill="none"/><circle cx="-9" cy="10" r="2.2" fill="#10c020"/><circle cx="-5.5" cy="-1" r="2.4" fill="#10c020"/><circle cx="9" cy="-10" r="2.2" fill="#10c020"/><circle cx="10" cy="2" r="2.2" fill="#10c020"/><path d="M-7,-11 l2,2 l-2,2 l-2,-2z M2,5 l2,2 l-2,2 l-2,-2z" fill="none" stroke="#f02020" stroke-width="1.2"/></g>
<g transform="translate(589.7,89.0)"><rect x="-7.5" y="-8" width="15" height="16" fill="none" stroke="#b4b4b4" stroke-width="1.6"/></g>
<g transform="translate(623.2,89.0)"><circle cx="2" cy="-2" r="8" fill="none" stroke="#181818" stroke-width="2"/><path d="M-4,4 L-10,10" stroke="#181818" stroke-width="2.6"/><path d="M-2,-2H6 M2,-6V2" stroke="#181818" stroke-width="1.8"/><text x="5" y="6" font-size="4" fill="#333">%</text></g>
<g transform="translate(656.7,89.0)"><circle cx="2" cy="-2" r="8" fill="none" stroke="#b4b4b4" stroke-width="2"/><path d="M-4,4 L-10,10" stroke="#b4b4b4" stroke-width="2.6"/><path d="M-2,-2H6" stroke="#b4b4b4" stroke-width="1.8"/></g>
<g transform="translate(690.2,89.0)"><circle cx="2" cy="-2" r="8" fill="none" stroke="#b4b4b4" stroke-width="2"/><path d="M-4,4 L-10,10" stroke="#b4b4b4" stroke-width="2.6"/><path d="M-2,-6L6,2 M6,-6L-2,2" stroke="#b4b4b4" stroke-width="1.2"/></g>
<g transform="translate(723.7,89.0)"><rect x="-9" y="-8" width="18" height="16" fill="#f8f8f8" stroke="#202020" stroke-width="1.6"/><path d="M-7,7 L-2,1 L2,4 L5,2 L8,7" stroke="#303030" stroke-width="1.1" fill="none"/><path d="M-6,7 L-2,3 L1,6" stroke="#303030" stroke-width="0.9" fill="none"/><circle cx="4" cy="-3" r="2" fill="none" stroke="#303030" stroke-width="1.2"/></g>
<g transform="translate(757.2,89.0)"><g transform="rotate(-35)"><rect x="-12" y="-4" width="24" height="8" fill="#e8f040" stroke="#404000" stroke-width="1.2"/><path d="M-8,-4v4 M-4,-4v3 M0,-4v4 M4,-4v3 M8,-4v4" stroke="#404000" stroke-width="1"/></g></g>
<g transform="translate(790.7,89.0)"><rect x="-10" y="-10" width="20" height="20" fill="#e8e8f0" stroke="#f02020" stroke-width="1.5"/><path d="M0,-10V10 M-10,0H10" stroke="#f02020" stroke-width="1.5"/><circle cx="-5" cy="-5" r="1.6" fill="#f02020"/><circle cx="-5" cy="5" r="1.6" fill="#f02020"/><circle cx="5" cy="-5" r="1.6" fill="#f02020"/><circle cx="5" cy="5" r="1.6" fill="#f02020"/><path d="M-5,-9V9 M5,-9V9 M-9,-5H9 M-9,5H9" stroke="#f08080" stroke-width="0.8"/></g>
<g transform="translate(824.2,89.0)"><path d="M-10,3 L-2,8 L8,2" stroke="#202020" stroke-width="1.3" fill="none"/><path d="M-10,6 L-2,11 L8,5" stroke="#202020" stroke-width="1.3" fill="none"/><path d="M-10,0 L-3,-5 L7,-2 L0,4Z" fill="#f0f040" stroke="#202020" stroke-width="1.3"/><path d="M7,-10 V-5 M4.5,-7.5 L7,-4.5 L9.5,-7.5" stroke="#181818" stroke-width="1.6" fill="none"/></g>
<g transform="translate(857.7,89.0)"><path d="M-8,-8 L8,8 M8,-8 L-8,8" stroke="#7c7c78" stroke-width="3"/><path d="M-4,-9 L0,-3 L4,-9" stroke="#7c7c78" stroke-width="2" fill="none"/></g><g transform="translate(1092.8,87.7)"><path d="M-8,-9 L6,-4 L1,-1 L8,7 L6,9 L-1,1 L-4,6Z" fill="#f02828" stroke="#401010" stroke-width="1"/></g>
<g transform="translate(1125.0,87.7)"><circle cx="1" cy="-8" r="2.2" fill="none" stroke="#b4b4b4" stroke-width="1.1"/><path d="M-3,-4 H3 L0,2 L4,6 L-1,10 L-4,6 L1,2Z" fill="none" stroke="#b4b4b4" stroke-width="1.1"/></g>
<g transform="translate(1092.8,120.0)"><path d="M-9,-10 L9,8" stroke="#202020" stroke-width="5.5" stroke-linecap="round"/><path d="M-9,-10 L8,7" stroke="#d8d040" stroke-width="3"/><path d="M-9,-10 L-7,-8" stroke="#e03030" stroke-width="4"/><path d="M-7,11 H7" stroke="#707070" stroke-width="1"/></g>
<g transform="translate(1125.0,120.0)"><rect x="-9" y="-9" width="5" height="5" fill="#40d0d0" stroke="#202020" stroke-width="1.2"/><path d="M3,-10 Q8,-8 6,-2 L9,-3 L5,2 L1,-3 L4,-2 Q5,-7 2,-8Z" fill="#181818"/><circle cx="-1" cy="2" r="2.8" fill="#e8e820" stroke="#202020" stroke-width="1"/><path d="M-7,10 L-3,5 L1,10Z" fill="#2030e0"/><rect x="4" y="5" width="5" height="5" fill="#f02020" stroke="#202020" stroke-width="1"/></g>
<g transform="translate(1092.8,152.3)"><text x="0.5" y="6" font-family="Liberation Serif, serif" font-size="14" font-weight="bold" text-anchor="middle" fill="#181818" letter-spacing="-0.8">A<tspan font-size="10.5">BC</tspan></text></g>
<g transform="translate(1125.0,152.3)"><rect x="-12" y="-11.5" width="24" height="23" fill="none" stroke="#202020" stroke-width="1.5"/><text x="0.5" y="-0.5" font-family="Liberation Serif, serif" font-size="12.5" font-weight="bold" text-anchor="middle" fill="#181818" letter-spacing="-0.8">A<tspan font-size="10">BC</tspan></text><text x="0.5" y="10" font-family="Liberation Serif, serif" font-size="12.5" font-weight="bold" text-anchor="middle" fill="#181818" letter-spacing="-0.8">A<tspan font-size="10">BC</tspan></text></g>
<g transform="translate(1092.8,184.6)"><rect x="-9" y="-8" width="12" height="11" fill="#e8e8e8" stroke="#181818" stroke-width="1.6"/><path d="M8,-9 V5 M6,-7 L8,-9 L10,-7 M6,3 L8,5 L10,3 M-9,8 H4 M-7,6 L-9,8 L-7,10 M2,6 L4,8 L2,10" stroke="#1830e0" stroke-width="1.2" fill="none"/></g>
<g transform="translate(1125.0,184.6)"><circle cx="0" cy="0" r="9" fill="none" stroke="#404040" stroke-width="1.3"/><ellipse cx="0" cy="0" rx="10" ry="4" fill="none" stroke="#404040" stroke-width="1.2" transform="rotate(-45)"/></g>
<g transform="translate(1092.8,216.9)"><rect x="-9" y="-8" width="18" height="17" fill="#98e0e8" stroke="#181818" stroke-width="1.8"/><path d="M-8,8 L-3,1 L1,5 L4,2 L8,8Z" fill="#e0e040" stroke="#606000" stroke-width="0.8"/><circle cx="4" cy="-3" r="2" fill="#f0f040"/><path d="M-11,-10 h3 M-11,-10 v3 M11,-10 h-3 M11,-10 v3 M-11,11 h3 M-11,11 v-3 M11,11 h-3 M11,11 v-3" stroke="#181818" stroke-width="1.5"/></g>
<g transform="translate(1125.0,216.9)"><path d="M-12,0 L-3,-7 V-4 H12 L8,0.5 L12,5 H-3 V7Z" fill="#101010"/></g>
<g transform="translate(1092.8,249.2)"><rect x="-11" y="-10" width="22" height="21" fill="#f4f4f4" stroke="#202020" stroke-width="1.3"/><rect x="-9" y="-7" width="2" height="2" fill="#f02020"/><path d="M-6,-6H-3 M-1,-6H8" stroke="#202020" stroke-width="1.3"/><rect x="-9" y="-2" width="2" height="2" fill="#10d020"/><path d="M-6,-1H-3 M-1,-1H8" stroke="#202020" stroke-width="1.3"/><rect x="-9" y="3" width="2" height="2" fill="#2020f0"/><path d="M-6,4H-3 M-1,4H8" stroke="#202020" stroke-width="1.3"/><rect x="-9" y="7" width="2" height="2" fill="#f080f0"/><path d="M-6,8H-3 M-1,8H8" stroke="#202020" stroke-width="1.3"/></g>
<g transform="translate(1125.0,249.2)"><path d="M-6,-6 L-8,-1 L-3,-1 M-7,-2 Q0,-10 6,-4 Q10,2 2,8" stroke="#b4b4b4" stroke-width="1.3" fill="none"/></g>
<g transform="translate(1092.8,281.5)"><path d="M-10,-5H10 M-10,6H10" stroke="#b4b4b4" stroke-width="1.6" stroke-dasharray="2,2"/><path d="M0,-3V4 M-2,2L0,4L2,2" stroke="#b4b4b4" stroke-width="1" fill="none"/></g>
<g transform="translate(1125.0,281.5)"><path d="M-10,-6H10" stroke="#181818" stroke-width="1.8" stroke-dasharray="3,1.5"/><path d="M-10,6H10" stroke="#181818" stroke-width="1.8" stroke-dasharray="1.8,3"/><path d="M0,-4V3 M-2.5,0.5L0,3L2.5,0.5" stroke="#181818" stroke-width="1.5" fill="none"/></g>
<g transform="translate(1092.8,313.8)"><path d="M-10,6 L-3,3 M3,-2 L10,-6" stroke="#b4b4b4" stroke-width="2" stroke-dasharray="2,1"/></g>
<g transform="translate(1125.0,313.8)"><path d="M-9,8 L-3,3 M4,-3 L9,-9" stroke="#b4b4b4" stroke-width="2" stroke-dasharray="2,1"/></g>
<g transform="translate(1092.8,346.1)"><rect x="-8" y="-8" width="9" height="9" fill="none" stroke="#b4b4b4" stroke-width="1.2"/><rect x="-4" y="-4" width="9" height="9" fill="#e4e4e4" stroke="#b4b4b4" stroke-width="1.2"/><rect x="0" y="0" width="8" height="8" fill="#e4e4e4" stroke="#b4b4b4" stroke-width="1.2"/></g>
<g transform="translate(1125.0,346.1)"><rect x="-8" y="-8" width="9" height="9" fill="none" stroke="#b4b4b4" stroke-width="1.2"/><rect x="-4" y="-4" width="9" height="9" fill="#e4e4e4" stroke="#b4b4b4" stroke-width="1.2"/><rect x="0" y="0" width="8" height="8" fill="#e4e4e4" stroke="#b4b4b4" stroke-width="1.2"/></g>
<g transform="translate(1092.8,378.4)"><rect x="-10" y="-8" width="20" height="16" fill="#f02828" stroke="#181818" stroke-width="1"/><rect x="-7" y="-5.5" width="14" height="11" fill="#e0e0e0" stroke="#181818" stroke-width="1"/></g>
<g transform="translate(1125.0,378.4)"><rect x="-10" y="-8" width="20" height="16" fill="#f8f8f8" stroke="#181818" stroke-width="1.3"/><rect x="-8" y="-6" width="16" height="12" fill="#f03030"/></g>
<g transform="translate(1092.8,410.7)"><rect x="-9" y="-9" width="5" height="5" fill="#b4b4b4"/><rect x="4" y="4" width="5" height="5" fill="#b4b4b4"/><circle cx="0" cy="0" r="2" fill="none" stroke="#b4b4b4"/></g>
<g transform="translate(1125.0,410.7)"><rect x="-9" y="-9" width="5" height="5" fill="#b4b4b4"/><rect x="4" y="4" width="5" height="5" fill="#b4b4b4"/></g>
<g transform="translate(1092.8,443.0)"><path d="M7,-9 H-7 L1,0 L-7,9 H7" stroke="#b4b4b4" stroke-width="1.6" fill="none"/></g>
<g transform="translate(1125.0,443.0)"><circle cx="0" cy="0" r="8.5" fill="none" stroke="#b4b4b4" stroke-width="2.2"/><path d="M-6,6 L6,-6" stroke="#b4b4b4" stroke-width="2.2"/></g>
<g transform="translate(1092.8,475.3)"><path d="M-7,-6 H7 M-2,-8 H2 M-5,-5 L-4,9 H4 L5,-5 M-2,-3V7 M2,-3V7" stroke="#b4b4b4" stroke-width="1.3" fill="none"/></g>
<g transform="translate(1125.0,475.3)"><rect x="-10" y="-9" width="20" height="18" fill="#f4f4f4" stroke="#181818" stroke-width="1.4"/><path d="M-7,6 L-4,-1 L1,-5 L7,-4 L6,2 L-3,7Z" fill="#f02828" stroke="#181818" stroke-width="1"/></g>
<g transform="translate(1092.8,507.6)"><path d="M-8,-7 H-3 V-10 H3 V-7 H8 V11 H-8Z" fill="none" stroke="#b4b4b4" stroke-width="1.4"/></g>
<g transform="translate(1125.0,507.6)"><path d="M-2,-9 H2 M0,-9 V-4 M-6,-4 H6 L8,5 H-8Z M-8,5 V10 H8 V5" stroke="#b4b4b4" stroke-width="1.3" fill="none"/></g>
<g transform="translate(1092.8,539.9)"><path d="M-5,-5 Q-5,-10 0,-10 Q6,-10 6,-5 Q6,-1 1,1 V4" stroke="#202020" stroke-width="4" fill="none"/><path d="M-5,-5 Q-5,-10 0,-10 Q6,-10 6,-5 Q6,-1 1,1 V4" stroke="#40a8a8" stroke-width="2" fill="none"/><circle cx="1" cy="9" r="2" fill="#40a8a8" stroke="#202020" stroke-width="0.8"/></g>
<g transform="translate(1125.0,539.9)"><rect x="0" y="-10" width="9" height="9" fill="#f0f040" stroke="#202020" stroke-width="1"/><path d="M-10,2 L-2,-6 V5Z" fill="#2030e0" stroke="#202020" stroke-width="0.8"/><circle cx="3" cy="3" r="6" fill="#40a8a0" stroke="#202020" stroke-width="1"/></g>
<g transform="translate(1092.8,572.2)"><g transform="scale(1,1)"><rect x="-2" y="-11" width="10" height="12" fill="#f8f8f8" stroke="#202020" stroke-width="1.2"/><path d="M0,-8H6 M0,-5H6 M0,-2H6" stroke="#2020f0" stroke-width="1"/><path d="M-8,4 V-3 Q-8,-6 -4,-6 H-1" stroke="#181818" stroke-width="2.2" fill="none"/><path d="M-2,-9 L1,-6 L-2,-3Z" fill="#181818"/><rect x="-9" y="5" width="18" height="6" fill="#e8e8e8" stroke="#181818" stroke-width="1.4"/><rect x="-7" y="7.5" width="4" height="1.2" fill="#e02020"/></g></g>
<g transform="translate(1125.0,572.2)"><g transform="scale(-1,1)"><rect x="-2" y="-11" width="10" height="12" fill="#f8f8f8" stroke="#202020" stroke-width="1.2"/><path d="M0,-8H6 M0,-5H6 M0,-2H6" stroke="#2020f0" stroke-width="1"/><path d="M-8,4 V-3 Q-8,-6 -4,-6 H-1" stroke="#181818" stroke-width="2.2" fill="none"/><path d="M-2,-9 L1,-6 L-2,-3Z" fill="#181818"/><rect x="-9" y="5" width="18" height="6" fill="#e8e8e8" stroke="#181818" stroke-width="1.4"/><rect x="-7" y="7.5" width="4" height="1.2" fill="#e02020"/></g></g>
<g transform="translate(1092.8,604.5)"><rect x="-10" y="-10" width="12" height="13" fill="#f4f4f4" stroke="#909090" stroke-width="0.8"/><rect x="-9" y="-9" width="3" height="3" fill="#f0b0f0"/><rect x="-5" y="-9" width="3" height="3" fill="#2040f0"/><rect x="-9" y="-4" width="3" height="3" fill="#e0e040"/><rect x="-5" y="-4" width="3" height="3" fill="#20c020"/><rect x="-9" y="1" width="3" height="3" fill="#e02020"/><rect x="-3" y="3" width="13" height="8" fill="#e8e8e8" stroke="#181818" stroke-width="1.6"/><path d="M1,6 H6 L3.5,8Z" fill="#181818"/><path d="M5,3 V-8 H1" stroke="#e02020" stroke-width="1.2" fill="none"/><path d="M3,-6 L5,-10 L7,-6Z" fill="#e02020"/></g>
<g transform="translate(1125.0,604.5)"><rect x="-10" y="-10" width="12" height="13" fill="#f4f4f4" stroke="#909090" stroke-width="0.8"/><rect x="-9" y="-9" width="3" height="3" fill="#f0b0f0"/><rect x="-5" y="-9" width="3" height="3" fill="#2040f0"/><rect x="-9" y="-4" width="3" height="3" fill="#e0e040"/><rect x="-5" y="-4" width="3" height="3" fill="#20c020"/><rect x="-9" y="1" width="3" height="3" fill="#e02020"/><rect x="-3" y="3" width="13" height="8" fill="#e8e8e8" stroke="#181818" stroke-width="1.6"/><path d="M1,6 H6 L3.5,8Z" fill="#181818"/><path d="M0,-8 H6 V0" stroke="#e02020" stroke-width="1.2" fill="none"/><path d="M3.5,-1 L6,3 L8.5,-1Z" fill="#e02020"/></g>
<g transform="translate(1092.8,636.8)"><g transform="scale(1.05) translate(-10.5,-11)"><rect x="0" y="0" width="21" height="22" fill="#1830f0"/><path d="M13,0 Q3,5 0,17 V22 H21 V0Z" fill="#3c6c6c"/><path d="M21,4 Q10,8 8,22 H21Z" fill="#10c820"/><path d="M21,9 Q13,13 13,22 H21Z" fill="#3c6c6c"/><path d="M21,11 Q15,14 15,22 H21Z" fill="#f03838"/></g></g>
<g transform="translate(1125.0,636.8)"><circle cx="2" cy="-3" r="7" fill="#f0f0f0" stroke="#282828" stroke-width="1.8"/><path d="M-3,2 L-10,9" stroke="#282828" stroke-width="3"/><text x="6" y="11" font-family="Liberation Sans, sans-serif" font-weight="bold" font-size="9" fill="#181818">?</text></g>
</svg>
<svg width="1152" height="1144" viewBox="0 0 1152 1144" style="position:absolute;left:0;top:0">
<defs><mask id="cb" maskUnits="userSpaceOnUse" x="0" y="0" width="1152" height="1144"><polygon points="324.0,281.3 432.0,281.3 432.0,303.5 454.0,303.5 454.0,325.0 475.0,325.0 475.0,346.8 496.8,346.8 496.8,367.8 518.0,367.8 518.0,389.0 539.5,389.0 539.5,411.0 560.8,411.0 560.8,432.2 582.5,432.2 582.5,454.0 604.8,454.0 604.8,475.2 669.2,475.2 669.2,518.5 690.7,518.5 690.7,583.5 712.0,583.5 712.0,647.6 733.2,647.6 733.2,711.6 754.8,711.6 754.8,777.5 776.0,777.5 776.0,841.5 797.5,841.5 797.5,906.0 820.0,906.0 820.0,927.5 754.8,927.5 754.8,949.0 648.0,949.0 648.0,970.4 604.8,970.4 604.8,949.0 560.8,949.0 560.8,970.4 518.0,970.4 518.0,949.0 475.0,949.0 475.0,927.5 454.0,927.5 454.0,884.2 389.0,884.2 389.0,862.8 367.5,862.8 367.5,841.5 345.5,841.5 345.5,799.0 324.0,799.0 324.0,777.5 302.0,777.5 302.0,756.0 281.0,756.0 281.0,711.6 259.5,711.6 259.5,690.8 238.0,690.8 238.0,669.0 216.8,669.0 216.8,647.6 195.0,647.6 195.0,626.2 174.0,626.2 174.0,604.8 152.8,604.8 152.8,583.5 130.0,583.5 130.0,562.0 108.0,562.0 108.0,497.2 130.0,497.2 130.0,454.0 152.8,454.0 152.8,432.2 174.0,432.2 174.0,411.0 195.0,411.0 195.0,346.8 216.8,346.8 216.8,325.0 281.0,325.0 281.0,303.5 324.0,303.5" fill="#fff" shape-rendering="crispEdges"/></mask></defs>
<g mask="url(#cb)">
<rect x="90" y="270" width="760" height="720" fill="#10d020"/>
<polygon points="596.0,400.0 596.0,452.0 595.0,454.0 599.0,469.0 602.5,475.0 606.0,492.5 611.0,505.0 621.0,522.5 630.0,532.5 636.0,542.5 640.0,554.0 644.0,565.0 649.0,577.5 654.0,591.0 662.4,597.9 679.9,604.9 697.3,613.6 712.2,622.4 745.0,622.0 745.0,706.0 750.0,711.0 742.0,735.0 736.5,740.0 728.8,751.5 724.0,768.8 725.0,797.7 736.5,820.8 746.0,840.0 751.0,859.0 749.0,886.0 744.0,909.0 738.5,927.5 739.4,948.6 740.0,1000.0 900.0,1000.0 900.0,400.0" fill="#88b0a8"/>
<polygon points="617.0,440.0 617.0,470.0 617.5,475.0 620.0,491.0 624.0,502.5 632.5,515.0 642.5,525.0 656.0,541.0 657.5,552.5 660.0,574.0 665.0,589.0 678.1,596.2 693.8,599.7 712.2,600.5 760.0,600.0 760.0,735.0 755.0,737.0 752.0,740.0 738.5,757.0 733.0,770.0 731.7,778.5 734.6,799.6 746.0,817.0 763.0,836.0 773.0,851.5 775.0,871.0 771.0,890.0 767.0,909.0 766.0,927.5 765.0,960.0 900.0,960.0 900.0,440.0" fill="#b8c0e0"/>
<polygon points="632.0,440.0 632.0,475.0 635.0,492.5 642.5,505.0 652.5,516.0 662.5,525.0 677.5,536.0 680.0,545.0 682.5,562.5 687.5,575.0 690.6,582.5 700.0,583.0 700.0,440.0" fill="#c8c4f0"/>
<polygon points="760.0,730.0 758.0,745.0 754.8,753.5 743.3,770.8 740.4,784.2 747.0,797.7 757.7,807.3 776.0,817.0 790.0,817.0 790.0,730.0" fill="#c8c4f0"/>
<polygon points="782.5,935.0 782.5,927.5 785.0,900.0 792.5,875.0 797.5,860.0 810.0,860.0 810.0,935.0" fill="#c8c4f0"/>
<polygon points="645.0,470.0 675.0,470.0 675.0,510.6 669.0,510.6 656.0,505.0 648.8,501.0 645.0,496.0" fill="#a880c8"/>
<polygon points="750.0,766.0 756.0,766.0 756.0,777.5 780.0,777.5 780.0,805.0 760.0,800.0 752.0,790.0 749.0,780.0" fill="#a880c8"/>
<polygon points="797.5,906.0 825.0,906.0 825.0,935.0 797.5,935.0" fill="#a880c8"/>
<polygon points="281.0,323.0 300.0,331.0 325.0,345.0 350.0,360.0 370.0,375.0 386.0,390.0 401.0,380.0 416.0,375.0 431.0,372.5 446.0,375.0 466.0,381.0 486.0,385.0 503.5,392.5 521.0,402.5 536.0,417.5 548.5,432.5 563.5,452.5 576.0,475.0 586.0,495.0 590.0,506.0 597.5,522.5 605.0,540.0 611.0,550.0 620.0,562.5 627.0,575.0 633.0,588.0 645.0,601.4 659.0,615.4 676.4,625.9 693.8,636.4 707.8,645.1 718.3,655.6 725.0,668.0 729.0,685.0 728.0,702.0 724.0,723.0 721.0,737.0 718.0,758.0 715.5,779.0 715.5,800.0 718.3,820.0 722.0,835.0 725.0,855.0 725.0,870.0 722.7,886.0 715.3,904.8 707.8,919.8 704.0,934.8 707.8,948.8 707.8,1000.0 100.0,1000.0 100.0,323.0" fill="#60f000"/>
<polygon points="100.0,412.0 174.0,412.0 187.5,422.5 200.0,432.5 212.0,437.0 230.0,437.0 245.0,435.0 260.0,430.0 280.0,430.0 295.0,437.0 307.0,447.0 320.0,457.0 337.0,465.0 350.0,467.0 365.0,465.0 386.0,455.0 401.0,444.0 418.5,440.0 433.5,437.0 453.5,439.0 473.5,442.5 491.0,450.0 501.0,460.0 508.5,470.0 521.0,482.5 536.0,490.0 554.0,500.0 566.0,510.0 573.0,524.0 576.5,542.0 573.5,559.0 571.5,573.4 575.0,587.4 589.0,594.4 603.0,599.7 610.0,608.4 618.7,618.9 629.2,629.4 637.9,638.1 648.4,646.9 665.9,652.1 683.4,653.8 697.3,660.8 706.0,672.0 708.0,688.0 705.7,699.2 687.5,710.3 689.0,727.0 696.0,740.0 700.0,750.0 700.0,772.0 697.3,786.0 693.1,800.0 691.7,820.0 693.0,835.0 695.5,860.0 695.0,880.0 692.0,900.0 685.0,920.0 681.6,934.8 685.3,948.8 685.0,1000.0 100.0,1000.0" fill="#d8f830"/>
<polygon points="100.0,551.0 110.0,551.0 130.0,532.0 150.0,517.0 165.0,495.0 177.0,475.0 192.0,462.0 205.0,459.0 217.0,462.0 230.0,475.0 245.0,490.0 260.0,502.0 280.0,510.0 300.0,507.0 320.0,502.0 340.0,499.0 365.0,495.0 386.0,494.0 406.0,495.0 431.0,499.0 446.0,505.0 458.5,511.0 476.0,512.5 496.0,511.0 516.0,512.5 536.0,516.0 551.0,522.5 557.0,537.0 554.0,555.0 548.0,569.0 551.0,584.0 563.0,595.0 578.5,601.4 587.2,611.9 590.7,622.4 589.0,636.4 587.5,653.8 594.0,664.0 609.2,665.6 623.1,671.2 634.3,676.8 645.5,681.0 662.3,679.6 679.1,679.6 688.9,686.6 690.3,690.8 681.9,700.6 673.5,711.7 673.5,716.0 679.1,732.7 681.9,743.9 684.7,755.1 683.3,766.3 679.1,777.5 674.0,790.0 670.7,800.0 670.7,820.0 672.2,830.0 670.4,858.0 661.0,873.0 646.0,886.0 631.0,899.0 618.0,903.0 605.0,901.0 595.5,908.6 593.7,919.8 595.5,931.0 605.0,927.3 616.0,921.7 621.7,912.3 625.5,908.6 631.0,916.0 638.6,927.3 649.8,938.5 661.0,942.0 664.7,948.8 665.0,1000.0 100.0,1000.0" fill="#f8f860"/>
<polygon points="165.0,570.0 180.0,568.0 190.0,575.0 193.0,588.0 188.0,600.0 175.0,606.0 160.0,604.0 156.0,590.0 158.0,578.0" fill="#d8f830"/>
<polygon points="200.0,676.0 238.0,676.0 245.0,672.0 260.0,659.5 263.8,642.0 257.5,624.5 247.5,614.5 232.5,609.5 222.5,597.0 218.8,582.0 220.0,567.0 230.0,561.0 240.0,559.5 255.0,569.5 267.5,584.5 280.0,597.0 290.0,609.5 297.5,634.5 307.5,643.0 325.0,644.5 340.0,637.0 350.0,624.5 365.0,609.5 372.0,605.7 403.5,598.7 414.0,586.4 418.3,574.2 412.2,563.7 398.2,562.0 382.5,560.2 377.2,548.0 379.0,537.5 389.5,534.0 405.2,536.6 421.0,542.7 435.0,542.7 449.0,536.6 463.0,537.5 470.0,544.5 475.1,565.5 482.1,588.2 487.4,604.0 483.9,609.2 473.4,612.7 464.7,624.9 459.4,638.9 459.4,652.9 466.4,659.9 480.4,661.6 494.4,652.9 503.1,642.4 503.1,628.4 511.9,621.4 525.8,609.2 536.3,602.2 546.8,607.4 557.3,623.1 562.6,642.4 566.1,659.9 572.0,669.0 576.0,677.0 585.5,685.0 595.2,696.4 609.2,696.4 623.1,693.6 633.0,693.6 645.5,697.8 659.5,699.2 665.1,711.7 666.5,729.9 667.9,746.7 666.5,769.1 662.3,780.3 656.7,788.7 656.7,799.9 659.5,811.0 661.0,820.0 661.0,830.0 657.3,848.7 648.0,860.0 634.8,869.3 619.9,880.5 601.0,891.7 586.2,904.8 580.6,919.8 580.6,934.8 588.0,944.0 593.7,948.8 594.0,1000.0 200.0,1000.0" fill="#f8c060"/>
<polygon points="527.6,541.0 532.0,536.0 536.3,534.0 545.0,537.5 546.8,542.7 541.6,549.7 534.6,549.7" fill="#f8c060"/>
<polygon points="605.0,948.8 614.0,942.0 625.5,933.0 636.7,938.5 648.0,946.0 650.0,980.0 605.0,980.0" fill="#f8c060"/>
<polygon points="345.0,693.0 350.0,700.0 355.0,709.5 352.0,716.0 343.0,718.0 335.0,716.0 332.5,709.5 338.0,700.0" fill="#f8f860"/>
<polygon points="300.0,799.0 345.0,799.0 360.0,798.0 363.0,787.0 365.0,777.0 372.5,757.0 379.0,732.0 377.5,700.0 377.0,672.0 377.0,656.0 384.0,639.0 393.0,628.0 407.0,620.0 424.5,617.0 435.0,618.0 442.0,630.0 445.4,646.0 449.0,660.0 459.4,672.0 477.0,679.0 494.4,678.0 512.0,679.0 529.0,684.0 543.0,693.0 557.0,702.0 571.0,710.0 591.0,717.0 607.8,716.0 612.0,710.3 626.0,702.0 640.0,700.6 652.5,702.0 659.5,707.6 659.5,738.3 653.9,746.7 649.7,757.9 651.1,771.9 651.1,785.9 640.0,797.1 638.5,802.7 645.5,808.3 649.7,820.0 647.0,833.0 642.0,841.0 621.7,848.7 605.0,851.5 595.5,858.0 590.0,873.0 586.0,891.7 578.7,904.8 571.2,919.8 563.7,938.5 558.0,948.0 548.8,970.0 548.0,1000.0 300.0,1000.0" fill="#f88860"/>
<polygon points="440.0,927.0 455.0,927.5 465.0,900.0 480.0,880.0 500.0,870.0 520.0,875.0 526.0,887.5 526.0,910.0 522.5,930.0 512.5,945.0 510.0,949.0 510.0,1000.0 440.0,1000.0" fill="#f8c060"/>
<polygon points="407.0,644.1 417.5,641.5 429.7,642.4 435.0,652.9 433.2,665.1 422.7,670.3 410.5,668.6 406.1,658.1" fill="#f07058"/>
<polygon points="401.7,687.8 410.5,673.8 426.2,670.3 441.9,682.6 447.2,694.8 445.4,710.0 433.2,719.0 418.0,720.0 404.0,712.0 400.0,700.0" fill="#f07058"/>
<polygon points="480.0,720.0 490.0,705.0 505.0,702.0 517.0,708.0 520.0,725.0 512.0,740.0 497.0,743.0 482.0,735.0" fill="#f07058"/>
<polygon points="626.0,713.1 642.7,704.8 655.3,707.6 659.5,721.5 658.1,738.3 649.7,743.9 635.7,742.5 623.1,734.1 626.0,723.0" fill="#f07058"/>
<polygon points="412.5,840.0 430.0,824.0 445.0,827.5 456.0,845.0 452.5,867.5 435.0,880.0 417.5,879.0 410.0,862.5" fill="#f07058"/>
<polygon points="616.0,946.0 625.5,942.0 634.8,944.0 636.7,957.0 631.0,964.7 620.0,961.0 616.0,953.5" fill="#f07058"/>
</g>
<circle cx="323.75" cy="605" r="4" fill="#d8f830"/>
<circle cx="515.4" cy="581.2" r="4" fill="#d8f830"/>
<circle cx="475.1" cy="645.9" r="4" fill="#d8f830"/>
<circle cx="347.5" cy="431.5" r="5" fill="#30c840"/>
<g font-family="Liberation Sans, sans-serif" font-size="15.5" fill="#1a1a1a">
<path d="M268.1,303.3H294.1M281.1,290.3V316.3" stroke="#405060" stroke-width="1.3"/><circle cx="281.1" cy="303.3" r="3.6" fill="#158a15"/>
<polygon points="352.0,297.8 353.8,299.0 356.0,300.7 356.0,303.3 353.8,305.0 352.0,306.2 350.2,305.0 348.0,303.3 348.0,300.7 350.2,299.0" fill="#128a12"/><text x="0" y="0" transform="translate(351.5,324.5) scale(1,1.17)" text-anchor="middle">22</text>
<path d="M389.5,296.8 L406.0,280.2" stroke="#3a48d8" stroke-width="0.9"/><ellipse cx="0" cy="0" rx="4.6" ry="2.8" fill="none" stroke="#3a48e0" stroke-width="1.1" transform="translate(397.5,288.8) rotate(-45)"/><circle cx="389.5" cy="296.8" r="1.6" fill="#2030f0"/><circle cx="397.7" cy="292.1" r="1" fill="#2030f0"/><text x="0" y="0" transform="translate(397.0,311.2) scale(1,1.17)" text-anchor="middle">23</text>
<polygon points="221.8,337.1 223.6,338.2 225.8,339.9 225.8,342.6 223.6,344.2 221.8,345.4 219.9,344.2 217.8,342.6 217.8,339.9 219.9,338.2" fill="#128a12"/><text x="0" y="0" transform="translate(221.2,363.8) scale(1,1.17)" text-anchor="middle">29</text>
<path d="M290.5,343.0 L297.5,357.0 L283.5,357.0Z" fill="none" stroke="#111" stroke-width="1.3"/><circle cx="290.5" cy="353.5" r="2.6" fill="none" stroke="#111" stroke-width="1.1"/><path d="M282.5,357.3H298.5" stroke="#111" stroke-width="1.3"/><text x="0" y="0" transform="translate(290.0,373.5) scale(1,1.17)" text-anchor="middle">27</text>
<polygon points="220.8,419.6 222.6,420.8 224.8,422.4 224.8,425.1 222.6,426.8 220.8,427.9 218.9,426.8 216.8,425.1 216.8,422.4 218.9,420.8" fill="#128a12"/><text x="0" y="0" transform="translate(220.2,446.2) scale(1,1.17)" text-anchor="middle">27</text>
<polygon points="354.5,438.8 356.3,440.0 358.5,441.7 358.5,444.3 356.3,446.0 354.5,447.2 352.7,446.0 350.5,444.3 350.5,441.7 352.7,440.0" fill="#128a12"/><text x="0" y="0" transform="translate(354.0,465.5) scale(1,1.17)" text-anchor="middle">24</text>
<polygon points="389.8,402.6 391.6,403.8 393.8,405.4 393.8,408.1 391.6,409.8 389.8,410.9 387.9,409.8 385.8,408.1 385.8,405.4 387.9,403.8" fill="#128a12"/><text x="0" y="0" transform="translate(389.2,429.2) scale(1,1.17)" text-anchor="middle">26</text>
<polygon points="458.8,401.6 460.6,402.8 462.8,404.4 462.8,407.1 460.6,408.8 458.8,409.9 456.9,408.8 454.8,407.1 454.8,404.4 456.9,402.8" fill="#128a12"/><text x="0" y="0" transform="translate(458.2,428.2) scale(1,1.17)" text-anchor="middle">27</text>
<polygon points="495.2,435.8 497.1,437.0 499.2,438.7 499.2,441.3 497.1,443.0 495.2,444.2 493.4,443.0 491.2,441.3 491.2,438.7 493.4,437.0" fill="#128a12"/>
<polygon points="210.0,460.1 211.8,461.2 214.0,462.9 214.0,465.6 211.8,467.2 210.0,468.4 208.2,467.2 206.0,465.6 206.0,462.9 208.2,461.2" fill="#128a12"/><text x="0" y="0" transform="translate(209.5,486.8) scale(1,1.17)" text-anchor="middle">37</text>
<polygon points="285.0,495.1 286.8,496.2 289.0,497.9 289.0,500.6 286.8,502.2 285.0,503.4 283.2,502.2 281.0,500.6 281.0,497.9 283.2,496.2" fill="#128a12"/><text x="0" y="0" transform="translate(284.5,521.8) scale(1,1.17)" text-anchor="middle">34</text>
<polygon points="108.2,516.3 110.0,517.5 112.2,519.2 112.2,521.8 110.0,523.5 108.2,524.7 106.5,523.5 104.2,521.8 104.2,519.2 106.5,517.5" fill="#128a12"/><text x="0" y="0" transform="translate(107.8,543.0) scale(1,1.17)" text-anchor="middle">32</text>
<path d="M348.2,528.0 L364.8,511.5" stroke="#3a48d8" stroke-width="0.9"/><ellipse cx="0" cy="0" rx="4.6" ry="2.8" fill="none" stroke="#3a48e0" stroke-width="1.1" transform="translate(356.2,520.0) rotate(-45)"/><circle cx="348.2" cy="528.0" r="1.6" fill="#2030f0"/><circle cx="356.4" cy="523.3" r="1" fill="#2030f0"/><text x="0" y="0" transform="translate(355.8,542.5) scale(1,1.17)" text-anchor="middle">39</text>
<polygon points="401.5,465.3 403.3,466.5 405.5,468.2 405.5,470.8 403.3,472.5 401.5,473.7 399.7,472.5 397.5,470.8 397.5,468.2 399.7,466.5" fill="#128a12"/><text x="0" y="0" transform="translate(401.0,492.0) scale(1,1.17)" text-anchor="middle">33</text>
<polygon points="460.0,472.1 461.8,473.2 464.0,474.9 464.0,477.6 461.8,479.2 460.0,480.4 458.2,479.2 456.0,477.6 456.0,474.9 458.2,473.2" fill="#128a12"/><text x="0" y="0" transform="translate(459.5,498.8) scale(1,1.17)" text-anchor="middle">35</text>
<path d="M527.4,474.5 L531.0,470.9 L534.6,474.5 L531.0,478.1Z" fill="none" stroke="#262626" stroke-width="1"/><text x="0" y="0" transform="translate(530.5,497.0) scale(1,1.17)" text-anchor="middle">28</text>
<path d="M457.9,508.2 L461.5,504.6 L465.1,508.2 L461.5,511.9Z" fill="none" stroke="#262626" stroke-width="1"/><text x="0" y="0" transform="translate(461.0,530.8) scale(1,1.17)" text-anchor="middle">32</text>
<polygon points="656.8,492.1 658.5,493.2 660.8,494.9 660.8,497.6 658.5,499.2 656.8,500.4 655.0,499.2 652.8,497.6 652.8,494.9 655.0,493.2" fill="#128a12"/><text x="0" y="0" transform="translate(656.2,518.8) scale(1,1.17)" text-anchor="middle">2</text>
<polygon points="216.5,535.3 218.3,536.5 220.5,538.2 220.5,540.8 218.3,542.5 216.5,543.7 214.7,542.5 212.5,540.8 212.5,538.2 214.7,536.5" fill="#128a12"/><text x="0" y="0" transform="translate(216.0,562.0) scale(1,1.17)" text-anchor="middle">40</text>
<polygon points="144.5,549.8 146.3,551.0 148.5,552.7 148.5,555.3 146.3,557.0 144.5,558.2 142.7,557.0 140.5,555.3 140.5,552.7 142.7,551.0" fill="#128a12"/><text x="0" y="0" transform="translate(144.0,576.5) scale(1,1.17)" text-anchor="middle">38</text>
<polygon points="325.0,548.3 326.8,549.5 329.0,551.2 329.0,553.8 326.8,555.5 325.0,556.7 323.2,555.5 321.0,553.8 321.0,551.2 323.2,549.5" fill="#128a12"/><text x="0" y="0" transform="translate(324.5,575.0) scale(1,1.17)" text-anchor="middle">40</text>
<path d="M388.4,548.0 L392.0,544.4 L395.6,548.0 L392.0,551.6Z" fill="none" stroke="#262626" stroke-width="1"/><text x="0" y="0" transform="translate(391.5,570.5) scale(1,1.17)" text-anchor="middle">43</text>
<polygon points="393.3,579.1 395.1,580.3 397.3,582.0 397.3,584.6 395.1,586.3 393.3,587.5 391.5,586.3 389.3,584.6 389.3,582.0 391.5,580.3" fill="#128a12"/><text x="0" y="0" transform="translate(392.8,605.8) scale(1,1.17)" text-anchor="middle">35</text>
<path d="M459.3,545.9 L462.9,542.3 L466.5,545.9 L462.9,549.5Z" fill="none" stroke="#262626" stroke-width="1"/><text x="0" y="0" transform="translate(462.4,568.4) scale(1,1.17)" text-anchor="middle">43</text>
<polygon points="461.5,563.9 463.3,565.1 465.5,566.8 465.5,569.4 463.3,571.1 461.5,572.3 459.7,571.1 457.5,569.4 457.5,566.8 459.7,565.1" fill="#128a12"/><text x="0" y="0" transform="translate(461.0,590.6) scale(1,1.17)" text-anchor="middle">44</text>
<polygon points="491.4,556.0 493.2,557.2 495.4,558.9 495.4,561.5 493.2,563.2 491.4,564.4 489.6,563.2 487.4,561.5 487.4,558.9 489.6,557.2" fill="#128a12"/><text x="0" y="0" transform="translate(490.9,582.7) scale(1,1.17)" text-anchor="middle">36</text>
<polygon points="510.1,541.7 511.9,542.9 514.1,544.6 514.1,547.2 511.9,548.9 510.1,550.1 508.3,548.9 506.1,547.2 506.1,544.6 508.3,542.9" fill="#128a12"/><text x="0" y="0" transform="translate(509.6,568.4) scale(1,1.17)" text-anchor="middle">38</text>
<polygon points="533.7,540.3 535.5,541.5 537.7,543.2 537.7,545.8 535.5,547.5 533.7,548.7 531.9,547.5 529.7,545.8 529.7,543.2 531.9,541.5" fill="#128a12"/><text x="0" y="0" transform="translate(533.2,567.0) scale(1,1.17)" text-anchor="middle">45</text>
<polygon points="521.8,572.6 523.6,573.8 525.8,575.5 525.8,578.1 523.6,579.8 521.8,581.0 520.0,579.8 517.8,578.1 517.8,575.5 520.0,573.8" fill="#128a12"/><text x="0" y="0" transform="translate(521.3,599.3) scale(1,1.17)" text-anchor="middle">33</text>
<polygon points="544.7,592.2 546.5,593.4 548.7,595.1 548.7,597.7 546.5,599.4 544.7,600.6 542.9,599.4 540.7,597.7 540.7,595.1 542.9,593.4" fill="#128a12"/><text x="0" y="0" transform="translate(544.2,618.9) scale(1,1.17)" text-anchor="middle">42</text>
<polygon points="569.8,575.3 571.5,576.5 573.8,578.2 573.8,580.8 571.5,582.5 569.8,583.7 568.0,582.5 565.8,580.8 565.8,578.2 568.0,576.5" fill="#128a12"/><text x="0" y="0" transform="translate(569.2,602.0) scale(1,1.17)" text-anchor="middle">27</text>
<polygon points="607.5,549.8 609.3,551.0 611.5,552.7 611.5,555.3 609.3,557.0 607.5,558.2 605.7,557.0 603.5,555.3 603.5,552.7 605.7,551.0" fill="#128a12"/><text x="0" y="0" transform="translate(607.0,576.5) scale(1,1.17)" text-anchor="middle">26</text>
<path d="M670.9,577.5 L674.5,573.9 L678.1,577.5 L674.5,581.1Z" fill="none" stroke="#262626" stroke-width="1"/><text x="0" y="0" transform="translate(674.0,600.0) scale(1,1.17)" text-anchor="middle">10</text>
<polygon points="606.0,609.8 607.8,611.0 610.0,612.7 610.0,615.3 607.8,617.0 606.0,618.2 604.2,617.0 602.0,615.3 602.0,612.7 604.2,611.0" fill="#128a12"/>
<polygon points="180.5,584.8 182.3,586.0 184.5,587.7 184.5,590.3 182.3,592.0 180.5,593.2 178.7,592.0 176.5,590.3 176.5,587.7 178.7,586.0" fill="#128a12"/><text x="0" y="0" transform="translate(180.0,611.5) scale(1,1.17)" text-anchor="middle">33</text>
<polygon points="240.8,578.3 242.6,579.5 244.8,581.2 244.8,583.8 242.6,585.5 240.8,586.7 238.9,585.5 236.8,583.8 236.8,581.2 238.9,579.5" fill="#128a12"/><text x="0" y="0" transform="translate(240.2,605.0) scale(1,1.17)" text-anchor="middle">44</text>
<polygon points="286.0,604.8 287.8,606.0 290.0,607.7 290.0,610.3 287.8,612.0 286.0,613.2 284.2,612.0 282.0,610.3 282.0,607.7 284.2,606.0" fill="#128a12"/><text x="0" y="0" transform="translate(285.5,631.5) scale(1,1.17)" text-anchor="middle">41</text>
<polygon points="315.5,602.3 317.3,603.5 319.5,605.2 319.5,607.8 317.3,609.5 315.5,610.7 313.7,609.5 311.5,607.8 311.5,605.2 313.7,603.5" fill="#128a12"/><text x="0" y="0" transform="translate(315.0,629.0) scale(1,1.17)" text-anchor="middle">33</text>
<polygon points="362.5,609.8 364.3,611.0 366.5,612.7 366.5,615.3 364.3,617.0 362.5,618.2 360.7,617.0 358.5,615.3 358.5,612.7 360.7,611.0" fill="#128a12"/>
<path d="M226.2,648.8 L242.8,632.2" stroke="#3a48d8" stroke-width="0.9"/><ellipse cx="0" cy="0" rx="4.6" ry="2.8" fill="none" stroke="#3a48e0" stroke-width="1.1" transform="translate(234.2,640.8) rotate(-45)"/><circle cx="226.2" cy="648.8" r="1.6" fill="#2030f0"/><circle cx="234.4" cy="644.0" r="1" fill="#2030f0"/><text x="0" y="0" transform="translate(233.8,663.2) scale(1,1.17)" text-anchor="middle">38</text>
<polygon points="440.2,616.8 442.0,618.0 444.2,619.7 444.2,622.3 442.0,624.0 440.2,625.2 438.4,624.0 436.2,622.3 436.2,619.7 438.4,618.0" fill="#128a12"/><text x="0" y="0" transform="translate(439.7,643.5) scale(1,1.17)" text-anchor="middle">46</text>
<path d="M420.5,643.3 L424.1,639.7 L427.7,643.3 L424.1,646.9Z" fill="none" stroke="#262626" stroke-width="1"/><text x="0" y="0" transform="translate(423.6,665.8) scale(1,1.17)" text-anchor="middle">53</text>
<polygon points="469.6,636.4 471.4,637.6 473.6,639.3 473.6,641.9 471.4,643.6 469.6,644.8 467.8,643.6 465.6,641.9 465.6,639.3 467.8,637.6" fill="#128a12"/><text x="0" y="0" transform="translate(469.1,663.1) scale(1,1.17)" text-anchor="middle">32</text>
<polygon points="550.0,632.6 551.8,633.8 554.0,635.5 554.0,638.1 551.8,639.8 550.0,641.0 548.2,639.8 546.0,638.1 546.0,635.5 548.2,633.8" fill="#128a12"/><text x="0" y="0" transform="translate(549.5,659.3) scale(1,1.17)" text-anchor="middle">44</text>
<polygon points="642.2,644.5 644.0,645.8 646.2,647.5 646.2,650.0 644.0,651.8 642.2,653.0 640.5,651.8 638.2,650.0 638.2,647.5 640.5,645.8" fill="#128a12"/><text x="0" y="0" transform="translate(641.8,671.2) scale(1,1.17)" text-anchor="middle">31</text>
<polygon points="596.8,649.8 598.5,651.0 600.8,652.7 600.8,655.3 598.5,657.0 596.8,658.2 595.0,657.0 592.8,655.3 592.8,652.7 595.0,651.0" fill="#128a12"/><text x="0" y="0" transform="translate(596.2,676.5) scale(1,1.17)" text-anchor="middle">33</text>
<polygon points="578.0,675.8 579.8,677.0 582.0,678.7 582.0,681.3 579.8,683.0 578.0,684.2 576.2,683.0 574.0,681.3 574.0,678.7 576.2,677.0" fill="#128a12"/><text x="0" y="0" transform="translate(577.5,702.5) scale(1,1.17)" text-anchor="middle">40</text>
<polygon points="604.8,683.5 606.5,684.8 608.8,686.5 608.8,689.0 606.5,690.8 604.8,692.0 603.0,690.8 600.8,689.0 600.8,686.5 603.0,684.8" fill="#128a12"/><text x="0" y="0" transform="translate(604.2,710.2) scale(1,1.17)" text-anchor="middle">35</text>
<polygon points="651.5,678.3 653.3,679.5 655.5,681.2 655.5,683.8 653.3,685.5 651.5,686.7 649.7,685.5 647.5,683.8 647.5,681.2 649.7,679.5" fill="#128a12"/><text x="0" y="0" transform="translate(651.0,705.0) scale(1,1.17)" text-anchor="middle">32</text>
<path d="M674.8,682.1 L678.4,678.5 L682.0,682.1 L678.4,685.7Z" fill="none" stroke="#262626" stroke-width="1"/><text x="0" y="0" transform="translate(677.9,704.6) scale(1,1.17)" text-anchor="middle">39</text>
<polygon points="294.2,687.8 296.1,689.0 298.2,690.7 298.2,693.3 296.1,695.0 294.2,696.2 292.4,695.0 290.2,693.3 290.2,690.7 292.4,689.0" fill="#128a12"/><text x="0" y="0" transform="translate(293.8,714.5) scale(1,1.17)" text-anchor="middle">42</text>
<polygon points="342.5,704.8 344.3,706.0 346.5,707.7 346.5,710.3 344.3,712.0 342.5,713.2 340.7,712.0 338.5,710.3 338.5,707.7 340.7,706.0" fill="#128a12"/><text x="0" y="0" transform="translate(342.0,731.5) scale(1,1.17)" text-anchor="middle">38</text>
<polygon points="311.8,715.8 313.6,717.0 315.8,718.7 315.8,721.3 313.6,723.0 311.8,724.2 309.9,723.0 307.8,721.3 307.8,718.7 309.9,717.0" fill="#128a12"/><text x="0" y="0" transform="translate(311.2,742.5) scale(1,1.17)" text-anchor="middle">42</text>
<polygon points="421.5,685.0 423.3,686.2 425.5,687.9 425.5,690.5 423.3,692.2 421.5,693.4 419.7,692.2 417.5,690.5 417.5,687.9 419.7,686.2" fill="#128a12"/><text x="0" y="0" transform="translate(421.0,711.7) scale(1,1.17)" text-anchor="middle">54</text>
<polygon points="503.0,709.0 504.8,710.2 507.0,712.0 507.0,714.5 504.8,716.2 503.0,717.5 501.2,716.2 499.0,714.5 499.0,712.0 501.2,710.2" fill="#128a12"/><text x="0" y="0" transform="translate(502.5,735.8) scale(1,1.17)" text-anchor="middle">52</text>
<polygon points="643.5,714.5 645.3,715.8 647.5,717.5 647.5,720.0 645.3,721.8 643.5,723.0 641.7,721.8 639.5,720.0 639.5,717.5 641.7,715.8" fill="#128a12"/><text x="0" y="0" transform="translate(643.0,741.2) scale(1,1.17)" text-anchor="middle">66</text>
<polygon points="680.0,717.0 681.8,718.2 684.0,720.0 684.0,722.5 681.8,724.2 680.0,725.5 678.2,724.2 676.0,722.5 676.0,720.0 678.2,718.2" fill="#128a12"/><text x="0" y="0" transform="translate(679.5,743.8) scale(1,1.17)" text-anchor="middle">27</text>
<polygon points="321.2,758.5 323.1,759.8 325.2,761.5 325.2,764.0 323.1,765.8 321.2,767.0 319.4,765.8 317.2,764.0 317.2,761.5 319.4,759.8" fill="#128a12"/><text x="0" y="0" transform="translate(320.8,785.2) scale(1,1.17)" text-anchor="middle">43</text>
<polygon points="420.2,755.3 422.1,756.5 424.2,758.2 424.2,760.8 422.1,762.5 420.2,763.7 418.4,762.5 416.2,760.8 416.2,758.2 418.4,756.5" fill="#128a12"/><text x="0" y="0" transform="translate(419.8,782.0) scale(1,1.17)" text-anchor="middle">49</text>
<polygon points="608.5,752.0 610.3,753.2 612.5,755.0 612.5,757.5 610.3,759.2 608.5,760.5 606.7,759.2 604.5,757.5 604.5,755.0 606.7,753.2" fill="#128a12"/><text x="0" y="0" transform="translate(608.0,778.8) scale(1,1.17)" text-anchor="middle">48</text>
<polygon points="645.0,769.0 646.8,770.2 649.0,772.0 649.0,774.5 646.8,776.2 645.0,777.5 643.2,776.2 641.0,774.5 641.0,772.0 643.2,770.2" fill="#128a12"/><text x="0" y="0" transform="translate(644.5,795.8) scale(1,1.17)" text-anchor="middle">48</text>
<path d="M746.5,789.2 L763.0,772.8" stroke="#3a48d8" stroke-width="0.9"/><ellipse cx="0" cy="0" rx="4.6" ry="2.8" fill="none" stroke="#3a48e0" stroke-width="1.1" transform="translate(754.5,781.2) rotate(-45)"/><circle cx="746.5" cy="789.2" r="1.6" fill="#2030f0"/><circle cx="754.7" cy="784.5" r="1" fill="#2030f0"/><text x="0" y="0" transform="translate(754.0,803.8) scale(1,1.17)" text-anchor="middle">1</text>
<polygon points="675.8,789.5 677.5,790.8 679.8,792.5 679.8,795.0 677.5,796.8 675.8,798.0 674.0,796.8 671.8,795.0 671.8,792.5 674.0,790.8" fill="#128a12"/><text x="0" y="0" transform="translate(675.2,816.2) scale(1,1.17)" text-anchor="middle">32</text>
<polygon points="368.0,791.8 369.8,793.0 372.0,794.7 372.0,797.3 369.8,799.0 368.0,800.2 366.2,799.0 364.0,797.3 364.0,794.7 366.2,793.0" fill="#128a12"/><text x="0" y="0" transform="translate(367.5,818.5) scale(1,1.17)" text-anchor="middle">45</text>
<polygon points="681.2,821.5 683.0,822.8 685.2,824.5 685.2,827.0 683.0,828.8 681.2,830.0 679.5,828.8 677.2,827.0 677.2,824.5 679.5,822.8" fill="#128a12"/><text x="0" y="0" transform="translate(680.8,848.2) scale(1,1.17)" text-anchor="middle">31</text>
<polygon points="639.5,822.5 641.3,823.8 643.5,825.5 643.5,828.0 641.3,829.8 639.5,831.0 637.7,829.8 635.5,828.0 635.5,825.5 637.7,823.8" fill="#128a12"/><text x="0" y="0" transform="translate(639.0,849.2) scale(1,1.17)" text-anchor="middle">51</text>
<path d="M490.8,830.0H516.8M503.8,817.0V843.0" stroke="#405060" stroke-width="1.3"/><circle cx="503.8" cy="830.0" r="3.6" fill="#158a15"/><text x="0" y="0" transform="translate(503.2,852.5) scale(1,1.17)" text-anchor="middle">45</text>
<polygon points="383.8,838.8 385.6,840.0 387.8,841.7 387.8,844.3 385.6,846.0 383.8,847.2 381.9,846.0 379.8,844.3 379.8,841.7 381.9,840.0" fill="#128a12"/><text x="0" y="0" transform="translate(383.2,865.5) scale(1,1.17)" text-anchor="middle">45</text>
<polygon points="432.0,844.0 433.8,845.2 436.0,847.0 436.0,849.5 433.8,851.2 432.0,852.5 430.2,851.2 428.0,849.5 428.0,847.0 430.2,845.2" fill="#128a12"/><text x="0" y="0" transform="translate(431.5,870.8) scale(1,1.17)" text-anchor="middle">54</text>
<path d="M576.4,876.2 L580.0,872.6 L583.6,876.2 L580.0,879.9Z" fill="none" stroke="#262626" stroke-width="1"/><text x="0" y="0" transform="translate(579.5,898.8) scale(1,1.17)" text-anchor="middle">47</text>
<polygon points="681.2,892.5 683.0,893.8 685.2,895.5 685.2,898.0 683.0,899.8 681.2,901.0 679.5,899.8 677.2,898.0 677.2,895.5 679.5,893.8" fill="#128a12"/><text x="0" y="0" transform="translate(680.8,919.2) scale(1,1.17)" text-anchor="middle">32</text>
<polygon points="504.5,896.5 506.3,897.8 508.5,899.5 508.5,902.0 506.3,903.8 504.5,905.0 502.7,903.8 500.5,902.0 500.5,899.5 502.7,897.8" fill="#128a12"/><text x="0" y="0" transform="translate(504.0,923.2) scale(1,1.17)" text-anchor="middle">39</text>
<polygon points="552.5,905.3 554.3,906.5 556.5,908.2 556.5,910.8 554.3,912.5 552.5,913.7 550.7,912.5 548.5,910.8 548.5,908.2 550.7,906.5" fill="#128a12"/><text x="0" y="0" transform="translate(552.0,932.0) scale(1,1.17)" text-anchor="middle">52</text>
<path d="M795.0,927.5 L811.5,911.0" stroke="#3a48d8" stroke-width="0.9"/><ellipse cx="0" cy="0" rx="4.6" ry="2.8" fill="none" stroke="#3a48e0" stroke-width="1.1" transform="translate(803.0,919.5) rotate(-45)"/><circle cx="795.0" cy="927.5" r="1.6" fill="#2030f0"/><circle cx="803.2" cy="922.8" r="1" fill="#2030f0"/><text x="0" y="0" transform="translate(802.5,942.0) scale(1,1.17)" text-anchor="middle">3</text>
<polygon points="603.8,915.0 605.5,916.2 607.8,918.0 607.8,920.5 605.5,922.2 603.8,923.5 602.0,922.2 599.8,920.5 599.8,918.0 602.0,916.2" fill="#128a12"/><text x="0" y="0" transform="translate(603.2,941.8) scale(1,1.17)" text-anchor="middle">28</text>
<polygon points="643.8,915.0 645.5,916.2 647.8,918.0 647.8,920.5 645.5,922.2 643.8,923.5 642.0,922.2 639.8,920.5 639.8,918.0 642.0,916.2" fill="#128a12"/><text x="0" y="0" transform="translate(643.2,941.8) scale(1,1.17)" text-anchor="middle">29</text>
<polygon points="493.8,922.0 495.6,923.2 497.8,925.0 497.8,927.5 495.6,929.2 493.8,930.5 491.9,929.2 489.8,927.5 489.8,925.0 491.9,923.2" fill="#128a12"/><text x="0" y="0" transform="translate(493.2,948.8) scale(1,1.17)" text-anchor="middle">41</text>
<path d="M711.9,931.2 L715.5,927.6 L719.1,931.2 L715.5,934.9Z" fill="none" stroke="#262626" stroke-width="1"/><text x="0" y="0" transform="translate(715.0,953.8) scale(1,1.17)" text-anchor="middle">22</text>
<polygon points="630.0,938.8 631.8,940.0 634.0,941.7 634.0,944.3 631.8,946.0 630.0,947.2 628.2,946.0 626.0,944.3 626.0,941.7 628.2,940.0" fill="#128a12"/><text x="0" y="0" transform="translate(629.5,965.5) scale(1,1.17)" text-anchor="middle">49</text>
<polygon points="528.8,943.3 530.5,944.5 532.8,946.2 532.8,948.8 530.5,950.5 528.8,951.7 527.0,950.5 524.8,948.8 524.8,946.2 527.0,944.5" fill="#128a12"/><text x="0" y="0" transform="translate(528.2,970.0) scale(1,1.17)" text-anchor="middle">47</text>
<path d="M967.4,284.0 L971.0,280.4 L974.6,284.0 L971.0,287.6Z" fill="none" stroke="#262626" stroke-width="1"/>
</g>
<path d="M1063,214.6H17.9V1020.4H1063" fill="none" stroke="#3434fa" stroke-width="1.7"/>
<rect x="23.5" y="220" width="1034.5" height="795" fill="none" stroke="#3434fa" stroke-width="1.8"/>
<g font-family="Liberation Sans, sans-serif" fill="#201810">
<rect x="885.5" y="976.5" width="131" height="5" fill="#fff" stroke="#201810" stroke-width="1.2"/>
<rect x="885" y="981" width="134" height="8" fill="#201810"/>
<text transform="translate(880,973) scale(1,1.15)" font-size="12">0</text>
<text transform="translate(1031,973) scale(1,1.15)" font-size="12" text-anchor="end">2,460</text>
<text transform="translate(949,1002) scale(1,1.1)" font-size="14" text-anchor="middle">FEET</text>
</g>
</svg>
</div></body></html>
